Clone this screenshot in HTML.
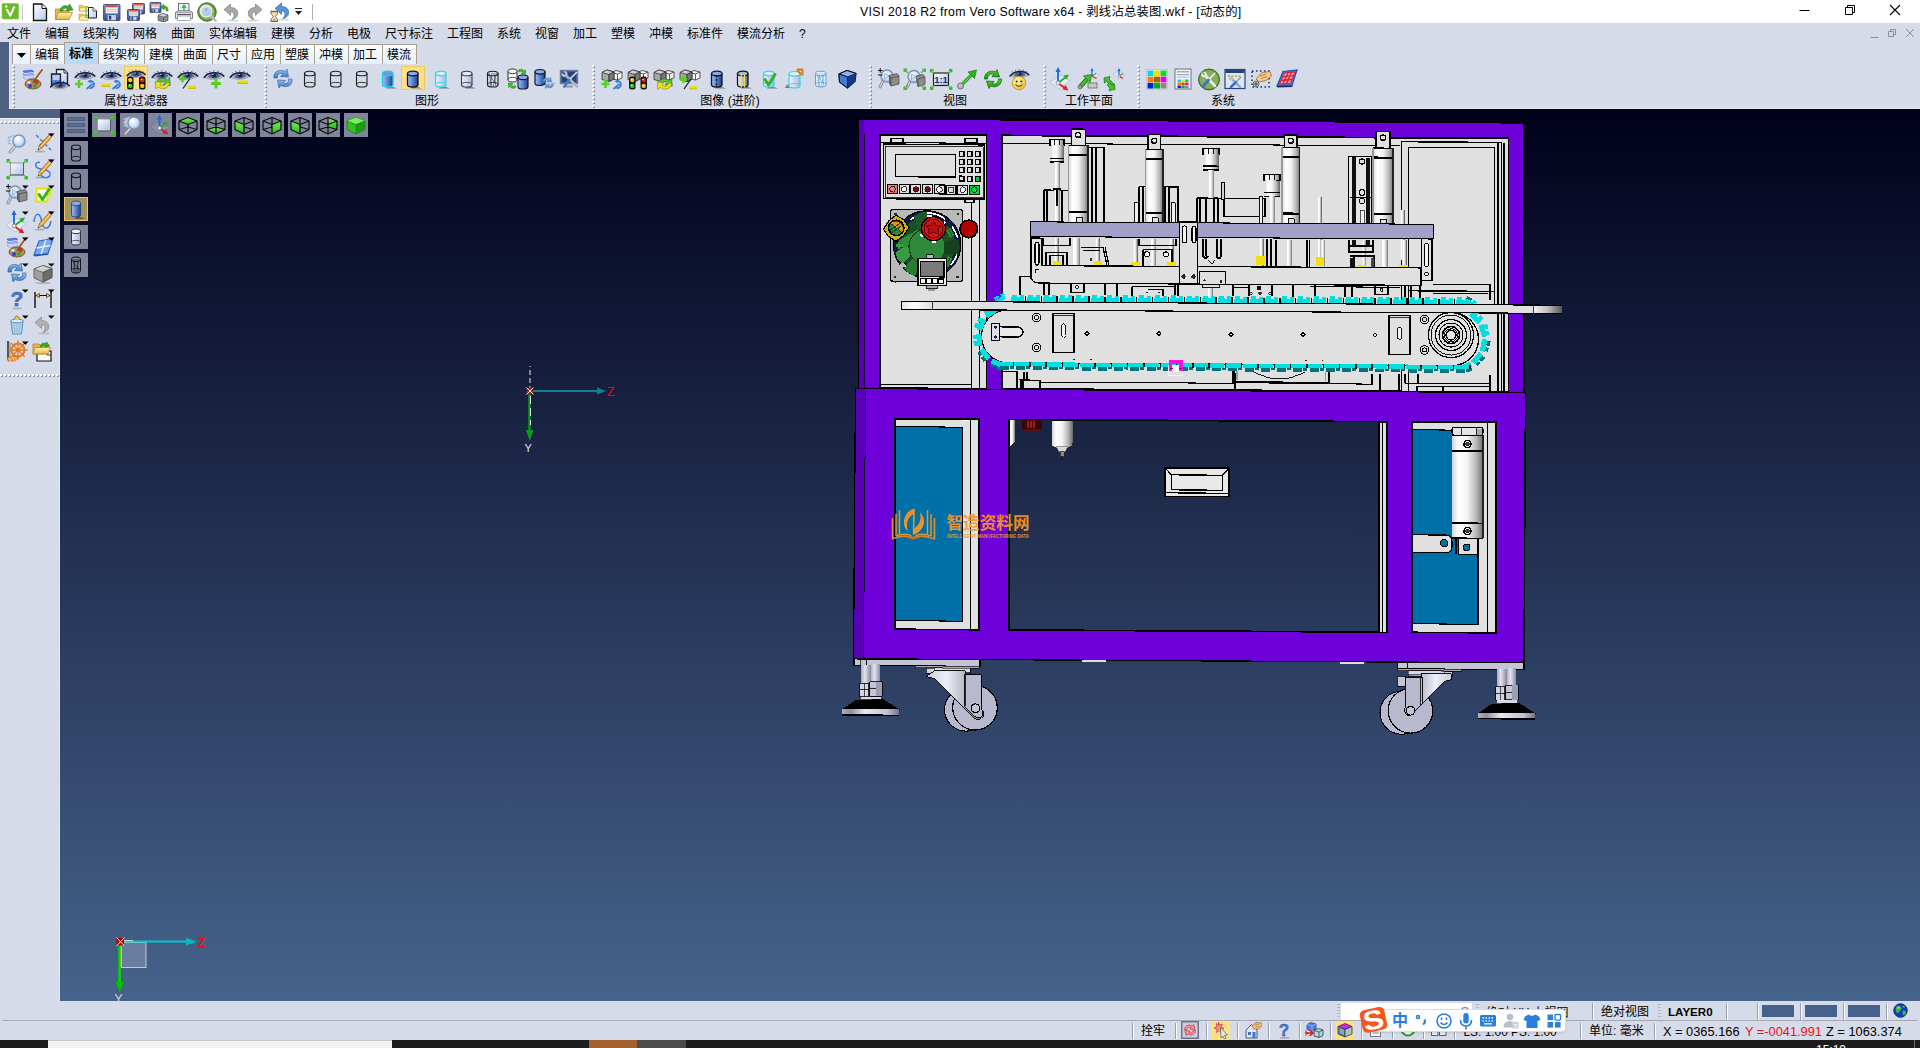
<!DOCTYPE html>
<html lang="zh-CN">
<head>
<meta charset="utf-8">
<title>VISI 2018 R2 from Vero Software x64 - 剥线沾总装图.wkf - [动态的]</title>
<style>
html,body{margin:0;padding:0;}
body{width:1920px;height:1048px;overflow:hidden;position:relative;background:#d6dbe9;
 font-family:"Liberation Sans","Noto Sans CJK SC",sans-serif;font-size:12px;color:#000;}
.abs{position:absolute;}
#titlebar{position:absolute;left:0;top:0;width:1920px;height:23px;background:#fff;}
#title{position:absolute;left:860px;top:4px;width:384px;height:17px;line-height:17px;font-size:12.300px;white-space:nowrap;color:#000;letter-spacing:0.270px;}
#menubar{position:absolute;left:0;top:23px;width:1920px;height:20px;background:#d6dbe9;}
#menubar span{position:absolute;top:2px;height:20px;line-height:19px;font-size:12px;white-space:nowrap;}
#lstrip{position:absolute;left:0;top:42px;width:9px;height:75px;background:#4d6082;}
#lstrip2{position:absolute;left:0;top:109px;width:60px;height:9px;background:#4d6082;}
#ribbon{position:absolute;left:9px;top:42px;width:1911px;height:67px;background:#d6dbe9;box-shadow:inset 1px -1px 0 #e8ecf5;}
#lpanel{position:absolute;left:0;top:118px;width:60px;height:883px;background:#d6dbe9;box-shadow:inset -1px 1px 0 #e8ecf5;}
.tab{position:absolute;top:44px;height:20px;line-height:20px;font-size:12px;text-align:center;text-indent:-1px;
 background:linear-gradient(#fafcff,#e6f0fd);border:1px solid #a8a08c;border-bottom:none;box-sizing:border-box;white-space:nowrap;}
.tab.on{top:42px;height:22px;line-height:23px;background:#bcd9f8;border-color:#a8a08c;font-weight:bold;}
.grp{position:absolute;top:94px;height:14px;line-height:14px;font-size:12px;text-align:center;white-space:nowrap;}
.grip{position:absolute;width:3px;background:repeating-linear-gradient(#fff 0,#fff 2px,rgba(0,0,0,0) 2px,rgba(0,0,0,0) 4px);box-shadow:1px 1px 0 rgba(120,130,150,.5);}
.gripv{position:absolute;top:65px;height:42px;width:2px;background:repeating-linear-gradient(#9aa3b8 0,#9aa3b8 1px,#fff 1px,#fff 2px,rgba(0,0,0,0) 2px,rgba(0,0,0,0) 4px);}
.griph{position:absolute;left:2px;width:56px;height:2px;background:repeating-linear-gradient(90deg,#fff 0,#fff 2px,#9aa3b8 2px,#9aa3b8 3px,rgba(0,0,0,0) 3px,rgba(0,0,0,0) 4px);}
.tbi{position:absolute;top:66px;width:24px;height:24px;}
.tbi.on{background:#ffe08a;box-shadow:inset 0 0 0 1px #f0c858;}
.tbi svg{position:absolute;left:0;top:1px;}
#viewport{position:absolute;left:60px;top:109px;width:1860px;height:892px;overflow:hidden;
 background:linear-gradient(180deg,#01011b 0%,#46638b 100%);}
.vb{position:absolute;width:24px;height:24px;background:#80859b;}
.vb.on{background:#a3955f;box-shadow:inset 0 0 0 1px #ecc765;}
#status1{position:absolute;left:0;top:1001px;width:1920px;height:20px;background:#d6dbe9;}
#status2{position:absolute;left:0;top:1021px;width:1920px;height:19px;background:#d6dbe9;}
#stline{position:absolute;left:2px;top:1020px;width:1916px;height:1px;background:#a6a9b2;}
#taskbar{position:absolute;left:0;top:1040px;width:1920px;height:8px;background:#1d1d1d;overflow:hidden;}
.st{position:absolute;white-space:nowrap;font-size:12px;line-height:16px;}
.sep{position:absolute;width:1px;background:#9aa0ae;box-shadow:1px 0 0 #fff;}
</style>
</head>
<body>

<svg width="0" height="0" style="position:absolute"><defs>
<linearGradient id="gBlueCyl" x1="0" x2="1" y1="0" y2="0"><stop offset="0" stop-color="#9cc0f0"/><stop offset=".35" stop-color="#6c98e0"/><stop offset="1" stop-color="#243c88"/></linearGradient>
<linearGradient id="gPaleCyl" x1="0" x2="1" y1="0" y2="0"><stop offset="0" stop-color="#eef2fb"/><stop offset=".5" stop-color="#cdd8ee"/><stop offset="1" stop-color="#a9b8d8"/></linearGradient>
<linearGradient id="gGreyCyl" x1="0" x2="1" y1="0" y2="0"><stop offset="0" stop-color="#e8ecf4"/><stop offset=".5" stop-color="#b8c4dc"/><stop offset="1" stop-color="#56648c"/></linearGradient>
<linearGradient id="gDoc" x1="0" x2="1" y1="0" y2="1"><stop offset="0" stop-color="#ffffff"/><stop offset="1" stop-color="#b4c8f0"/></linearGradient>
<linearGradient id="gBlueArrow" x1="0" x2="0" y1="0" y2="1"><stop offset="0" stop-color="#9cc4f0"/><stop offset="1" stop-color="#3a74c0"/></linearGradient>
<linearGradient id="gGreen" x1="0" x2="0" y1="0" y2="1"><stop offset="0" stop-color="#58d838"/><stop offset="1" stop-color="#1c8c14"/></linearGradient>
<radialGradient id="gLens" cx=".4" cy=".35" r=".7"><stop offset="0" stop-color="#ffffff"/><stop offset=".6" stop-color="#cfe0f4"/><stop offset="1" stop-color="#8fb0d8"/></radialGradient>
<radialGradient id="gSmile" cx=".4" cy=".35" r=".7"><stop offset="0" stop-color="#fff8b0"/><stop offset="1" stop-color="#f0b820"/></radialGradient>
<linearGradient id="gCubeTop" x1="0" x2="1" y1="0" y2="1"><stop offset="0" stop-color="#f0f0f0"/><stop offset="1" stop-color="#b0b0b0"/></linearGradient>
<linearGradient id="gFolder" x1="0" x2="0" y1="0" y2="1"><stop offset="0" stop-color="#fff0a8"/><stop offset="1" stop-color="#e8b848"/></linearGradient>
<linearGradient id="gFloppy" x1="0" x2="0" y1="0" y2="1"><stop offset="0" stop-color="#7890c8"/><stop offset="1" stop-color="#3c5090"/></linearGradient>
<linearGradient id="gBox" x1="0" x2="1" y1="0" y2="1"><stop offset="0" stop-color="#ffffff"/><stop offset="1" stop-color="#a8c0e8"/></linearGradient>
<linearGradient id="gGrCube" x1="0" x2="0" y1="0" y2="1"><stop offset="0" stop-color="#7cf060"/><stop offset="1" stop-color="#28b818"/></linearGradient>
<pattern id="pGrip" width="4" height="4" patternUnits="userSpaceOnUse"><rect x="1" y="1" width="2" height="2" fill="#8e97ae"/><rect x="0" y="0" width="2" height="2" fill="#ffffff"/></pattern>
</defs></svg>
<div id="titlebar">
<svg class="abs" style="left:1px;top:2px" width="20" height="20" viewBox="0 0 20 20"><rect x="1" y="1.500" width="16.500" height="15.500" rx="1" fill="#6cb82c"/><rect x="1" y="1.500" width="16.500" height="15.500" rx="1" fill="none" stroke="#8cd048" stroke-width=".8"/><path d="M4.500 7L8.500 14.500H10L14.500 4.500H12L9.300 11.500L6.800 7z" fill="#fff"/><circle cx="5.300" cy="4.500" r="1.200" fill="#fff"/></svg>
<svg class="abs" style="left:30px;top:2px" width="20" height="20" viewBox="0 0 20 20"><path d="M3.500 2H12L16.500 6.500V18.500H3.500z" fill="url(#gDoc)" stroke="#111" stroke-width="1.300"/><path d="M12 2V6.500H16.500" fill="#fff" stroke="#111" stroke-width="1"/></svg>
<svg class="abs" style="left:54px;top:2px" width="20" height="20" viewBox="0 0 20 20"><path d="M1.500 7H7L8.500 8.500H15V17.500H1.500z" fill="#e8b848" stroke="#b08020" stroke-width=".7"/><path d="M1.500 17.500L4.500 10.500H18.500L15 17.500z" fill="url(#gFolder)" stroke="#b08020" stroke-width=".7"/><path d="M6 9C6.500 4.500 11 2.500 14.500 4.500L15.500 2L19 8L12.500 8.500L13.500 6.500C11 5.500 8.500 6.500 8.500 9z" fill="#38b028" stroke="#187810" stroke-width=".7"/></svg>
<svg class="abs" style="left:78px;top:2px" width="20" height="20" viewBox="0 0 20 20"><path d="M1 3.500H5L6 4.500H10V9H1z" fill="#f0cc60" stroke="#c09830" stroke-width=".6"/><path d="M1 9L2.500 5.500H11L10 9z" fill="#fff0a8" stroke="#c09830" stroke-width=".5"/><path d="M1 12H5L6 13H10V18H1z" fill="#f0cc60" stroke="#c09830" stroke-width=".6"/><path d="M1 18L2.500 14H11L10 18z" fill="#fff0a8" stroke="#c09830" stroke-width=".5"/><path d="M8 5V15.500H13" fill="none" stroke="#58c848" stroke-width="1.200"/><path d="M10.500 5.500H15L18.500 9V16H10.500z" fill="url(#gDoc)" stroke="#222" stroke-width="1"/><path d="M15 5.500V9H18.500" fill="#fff" stroke="#222" stroke-width=".7"/></svg>
<svg class="abs" style="left:102px;top:2px" width="20" height="20" viewBox="0 0 20 20"><rect x="1.5" y="2.5" width="16.5" height="16" rx=".8" fill="url(#gFloppy)" stroke="#2c3c70" stroke-width=".8"/><rect x="3.81" y="3.1" width="11.879999999999999" height="8.32" fill="#f4f4f4"/><rect x="3.81" y="3.1" width="11.879999999999999" height="2.08" fill="#e84030"/><path d="M4.800000000000001 7.3h9.9M4.800000000000001 9.219999999999999h9.9" stroke="#a8a8a8" stroke-width=".6"/><rect x="5.625" y="13.06" width="8.25" height="5.12" fill="#c8d0e0"/><rect x="6.945" y="13.7" width="2.31" height="3.84" fill="#2c3c70"/></svg>
<svg class="abs" style="left:126px;top:2px" width="20" height="20" viewBox="0 0 20 20"><rect x="6.5" y="1.5" width="12" height="10.5" rx=".8" fill="url(#gFloppy)" stroke="#2c3c70" stroke-width=".8"/><rect x="8.18" y="2.1" width="8.64" height="5.46" fill="#f4f4f4"/><rect x="8.18" y="2.1" width="8.64" height="1.365" fill="#e84030"/><path d="M8.9 4.65h7.199999999999999M8.9 5.91h7.199999999999999" stroke="#a8a8a8" stroke-width=".6"/><rect x="9.5" y="8.43" width="6.0" height="3.36" fill="#c8d0e0"/><rect x="10.46" y="8.85" width="1.6800000000000002" height="2.52" fill="#2c3c70"/><rect x="1.5" y="7.5" width="12" height="11" rx=".8" fill="url(#gFloppy)" stroke="#2c3c70" stroke-width=".8"/><rect x="3.18" y="8.1" width="8.64" height="5.720000000000001" fill="#f4f4f4"/><rect x="3.18" y="8.1" width="8.64" height="1.4300000000000002" fill="#e84030"/><path d="M3.9000000000000004 10.8h7.199999999999999M3.9000000000000004 12.120000000000001h7.199999999999999" stroke="#a8a8a8" stroke-width=".6"/><rect x="4.5" y="14.760000000000002" width="6.0" height="3.52" fill="#c8d0e0"/><rect x="5.46" y="15.2" width="1.6800000000000002" height="2.6399999999999997" fill="#2c3c70"/></svg>
<svg class="abs" style="left:149px;top:2px" width="20" height="20" viewBox="0 0 20 20"><rect x="1" y="0.5" width="11" height="10" rx=".8" fill="url(#gFloppy)" stroke="#2c3c70" stroke-width=".8"/><rect x="2.54" y="1.1" width="7.92" height="5.2" fill="#f4f4f4"/><rect x="2.54" y="1.1" width="7.92" height="1.3" fill="#e84030"/><path d="M3.2 3.5h6.6M3.2 4.7h6.6" stroke="#a8a8a8" stroke-width=".6"/><rect x="3.75" y="7.1000000000000005" width="5.5" height="3.2" fill="#c8d0e0"/><rect x="4.630000000000001" y="7.5" width="1.54" height="2.4" fill="#2c3c70"/><path d="M9 13.500L13.500 11.500L19 13V18.500L14.500 20L9 18.500z" fill="#8c8c8c" stroke="#444" stroke-width=".6"/><path d="M9 13.500L14.500 15L19 13L13.500 11.500z" fill="#d8d8d8" stroke="#444" stroke-width=".5"/><path d="M14.500 15V20" stroke="#444" stroke-width=".5"/><path d="M19 9C19.500 5.500 17 3.500 14.500 4L14.800 2L11.500 5.500L15.500 7.800L15.200 5.800C16.500 5.800 17.500 7 17.200 9z" fill="#38b028" stroke="#187810" stroke-width=".5"/></svg>
<svg class="abs" style="left:174px;top:2px" width="20" height="20" viewBox="0 0 20 20"><rect x="4.500" y="1.500" width="10.500" height="9" fill="#e8f0fc" stroke="#506890" stroke-width=".9"/><path d="M9.800 8.500V5.500H7.800L10 2.500L12.200 5.500H10.200V8.500z" fill="#30c030" stroke="#18a018" stroke-width=".5"/><path d="M1.500 10.500H18.500V16.500H1.500z" fill="#e0e0e4" stroke="#707078" stroke-width=".9"/><path d="M1.500 10.500L4 8.500H16L18.500 10.500" fill="#c8c8d0" stroke="#707078" stroke-width=".7"/><rect x="3.500" y="14" width="13" height="4.500" fill="#fcfcfc" stroke="#8c8c94" stroke-width=".7"/><path d="M3 12.500h14" stroke="#58585c" stroke-width="1"/></svg>
<svg class="abs" style="left:197px;top:2px" width="20" height="20" viewBox="0 0 20 20"><circle cx="10" cy="10" r="9.300" fill="#5c9438" stroke="#386420" stroke-width=".8"/><circle cx="10" cy="10" r="7.500" fill="#88b860"/><path d="M13.500 13.500L19 19" stroke="#c8ccd4" stroke-width="2.600" stroke-linecap="round"/><path d="M13.500 13.500L19 19" stroke="#888c98" stroke-width=".7"/><circle cx="9" cy="9" r="5.800" fill="url(#gLens)" stroke="#e8ecf4" stroke-width="1.300"/><circle cx="9" cy="9" r="4" fill="#a8c4e4" opacity=".7"/><path d="M9 6v3.500" stroke="#6888b0" stroke-width=".9"/></svg>
<svg class="abs" style="left:222px;top:2px" width="20" height="20" viewBox="0 0 20 20"><g transform=""><path d="M2 7.500L8.500 2V5.500C14 5.500 16.500 9 15.500 13C14.800 15.500 12.500 17 10 17.500C12 15.500 12.500 13 11.500 11.500C10.800 10.300 9.800 10 8.500 10V13.500z" fill="#a8a8a8" stroke="#808080" stroke-width=".7"/><ellipse cx="11" cy="18.500" rx="6" ry="1" fill="#888" opacity=".35"/></g></svg>
<svg class="abs" style="left:244px;top:2px" width="20" height="20" viewBox="0 0 20 20"><g transform="translate(20 0) scale(-1 1)"><path d="M2 7.500L8.500 2V5.500C14 5.500 16.500 9 15.500 13C14.800 15.500 12.500 17 10 17.500C12 15.500 12.500 13 11.500 11.500C10.800 10.300 9.800 10 8.500 10V13.500z" fill="#a8a8a8" stroke="#808080" stroke-width=".7"/><ellipse cx="11" cy="18.500" rx="6" ry="1" fill="#888" opacity=".35"/></g></svg>
<svg class="abs" style="left:269px;top:2px" width="20" height="20" viewBox="0 0 20 20"><g transform="translate(4 -1)"><g transform=""><path d="M2 7.500L8.500 2V5.500C14 5.500 16.500 9 15.500 13C14.800 15.500 12.500 17 10 17.500C12 15.500 12.500 13 11.500 11.500C10.800 10.300 9.800 10 8.500 10V13.500z" fill="#5c90d8" stroke="#3868b0" stroke-width=".7"/><ellipse cx="11" cy="18.500" rx="6" ry="1" fill="#888" opacity=".35"/></g></g><path d="M2 9.500H8.500V11C8.500 12.500 6.500 13.500 6.500 14.500C6.500 15.500 8.500 16.500 8.500 18V19.500H2V18C2 16.500 4 15.500 4 14.500C4 13.500 2 12.500 2 11z" fill="#f0e4c0" stroke="#6c4c20" stroke-width=".8"/><path d="M1.500 9.500H9M1.500 19.500H9" stroke="#8c6428" stroke-width="1.400"/><path d="M3.500 18.500L5.250 16.500L7 18.500z" fill="#c09040"/></svg>
<svg class="abs" style="left:293px;top:8px" width="12" height="8" viewBox="0 0 12 8"><rect x="2" y="0" width="7" height="1" fill="#222"/><path d="M2 3h7l-3.5 4z" fill="#222"/></svg>
<div class="abs" style="left:22px;top:4px;width:1px;height:16px;background:#c8c8c8"></div>
<div class="abs" style="left:312px;top:4px;width:1px;height:16px;background:#b0b0b0"></div>
<div id="title">VISI 2018 R2 from Vero Software x64 - 剥线沾总装图.wkf - [动态的]</div>
<svg class="abs" style="left:1790px;top:0" width="130" height="23" viewBox="0 0 130 23">
<path d="M9.5 10.5h10" stroke="#000" stroke-width="1" fill="none"/>
<path d="M55.5 7.500h7v7h-7z M57.5 7.500v-2h7v7h-2" stroke="#000" stroke-width="1" fill="none"/>
<path d="M100 5l10 10M110 5l-10 10" stroke="#000" stroke-width="1.1" fill="none"/>
</svg>
</div>
<div id="menubar">
<span style="left:7px;width:24px">文件</span>
<span style="left:45px;width:24px">编辑</span>
<span style="left:83px;width:36px">线架构</span>
<span style="left:133px;width:24px">网格</span>
<span style="left:171px;width:24px">曲面</span>
<span style="left:209px;width:48px">实体编辑</span>
<span style="left:271px;width:24px">建模</span>
<span style="left:309px;width:24px">分析</span>
<span style="left:347px;width:24px">电极</span>
<span style="left:385px;width:48px">尺寸标注</span>
<span style="left:447px;width:36px">工程图</span>
<span style="left:497px;width:24px">系统</span>
<span style="left:535px;width:24px">视窗</span>
<span style="left:573px;width:24px">加工</span>
<span style="left:611px;width:24px">塑模</span>
<span style="left:649px;width:24px">冲模</span>
<span style="left:687px;width:36px">标准件</span>
<span style="left:737px;width:48px">模流分析</span>
<span style="left:799px;width:6px">?</span>
<svg class="abs" style="left:1865px;top:3px" width="55" height="14" viewBox="0 0 55 14">
<path d="M5.5 11.500h8" stroke="#8a8f9c" stroke-width="1" fill="none"/>
<path d="M23.500 5.500h5v5h-5z M25.500 5.500v-2h5v5h-2" stroke="#8a8f9c" stroke-width="1" fill="none"/>
<path d="M41 3l8 8M49 3l-8 8" stroke="#8a8f9c" stroke-width="1" fill="none"/>
</svg>
</div>
<div id="ribbon"></div><div id="lstrip"></div><div id="lstrip2"></div><div id="lpanel"></div>
<div class="tab" style="left:12px;width:19px"><svg width="9" height="5" viewBox="0 0 9 5" style="vertical-align:1px"><path d="M0 0h9l-4.500 5z" fill="#000"/></svg></div>
<div class="tab" style="left:30px;width:35px">编辑</div>
<div class="tab on" style="left:64px;width:35px">标准</div>
<div class="tab" style="left:98px;width:47px">线架构</div>
<div class="tab" style="left:144px;width:35px">建模</div>
<div class="tab" style="left:178px;width:35px">曲面</div>
<div class="tab" style="left:212px;width:35px">尺寸</div>
<div class="tab" style="left:246px;width:35px">应用</div>
<div class="tab" style="left:280px;width:35px">塑膜</div>
<div class="tab" style="left:314px;width:35px">冲模</div>
<div class="tab" style="left:348px;width:35px">加工</div>
<div class="tab" style="left:382px;width:35px">模流</div>
<svg class="abs" style="left:12px;top:65px" width="4" height="43" viewBox="0 0 4 43"><rect width="4" height="43" fill="url(#pGrip)"/></svg>
<svg class="abs" style="left:264px;top:65px" width="4" height="43" viewBox="0 0 4 43"><rect width="4" height="43" fill="url(#pGrip)"/></svg>
<svg class="abs" style="left:592px;top:65px" width="4" height="43" viewBox="0 0 4 43"><rect width="4" height="43" fill="url(#pGrip)"/></svg>
<svg class="abs" style="left:869px;top:65px" width="4" height="43" viewBox="0 0 4 43"><rect width="4" height="43" fill="url(#pGrip)"/></svg>
<svg class="abs" style="left:1043px;top:65px" width="4" height="43" viewBox="0 0 4 43"><rect width="4" height="43" fill="url(#pGrip)"/></svg>
<svg class="abs" style="left:1137px;top:65px" width="4" height="43" viewBox="0 0 4 43"><rect width="4" height="43" fill="url(#pGrip)"/></svg>
<div class="tbi" style="left:21px"><svg width="24" height="24" viewBox="0 0 24 24"><path d="M2 4L11 3L13 5L4 6.500z" fill="#5878f0" stroke="#2848c0" stroke-width=".5"/><path d="M2 7L11 6L13 8L4 9.500z" fill="#8ca4f4" stroke="#4060c8" stroke-width=".5"/><path d="M2 10L11 9L13 11L4 12.500z" fill="#d0d8f4" stroke="#7088c8" stroke-width=".5"/><path d="M3 6.600L12 5.600M3 9.600L12 8.600" stroke="#f8f8ff" stroke-width=".8"/><ellipse cx="12" cy="17" rx="8" ry="5" fill="#b88858" stroke="#6c4420" stroke-width=".8"/><ellipse cx="8" cy="15.500" rx="1.700" ry="1.300" fill="#f0e8d8"/><circle cx="15.500" cy="15" r="1.900" fill="#e02020"/><circle cx="14" cy="18.800" r="1.900" fill="#20b020"/><circle cx="9" cy="19" r="1.900" fill="#2040e0"/><path d="M21 3L13.500 13" stroke="#a05818" stroke-width="1.800" stroke-linecap="round"/><path d="M14.500 11.500L11.500 15.500L13 16z" fill="#444"/></svg></div>
<div class="tbi" style="left:47px"><svg width="24" height="24" viewBox="0 0 24 24"><path d="M9.500 2.500H17L20.500 6V17H9.500z" fill="url(#gDoc)" stroke="#20242c" stroke-width="1.300"/><path d="M17 2.500V6H20.500" fill="#d8e4f8" stroke="#20242c" stroke-width=".9"/><path d="M4.500 7H13.500V19H4.500z" fill="#5c84d8" stroke="#20242c" stroke-width="1.300"/><path d="M5.500 8H12.500V13H5.500z" fill="#b8ccf0"/><g transform="translate(2.7 12.8) scale(0.874 0.7789999999999999)"><path d="M1.500 9C5 3.500 17 2.500 22 7.500C18 11.500 7 12.500 1.500 9z" fill="#c4bcd4"/><path d="M5 8.500C7 3.500 17 3 19 7.500C16 11 8 11.500 5 8.500z" fill="#52709c"/><circle cx="12" cy="6.800" r="3.600" fill="#3c5888"/><circle cx="12" cy="6.800" r="1.900" fill="#101c38"/><circle cx="10.600" cy="5.500" r=".9" fill="#c8d8f0"/><path d="M1.200 9.200C5 2.800 17 1.300 22.300 7.600" fill="none" stroke="#182644" stroke-width="2" stroke-linecap="round"/><path d="M2 9.500C7 12.800 17 12 21.500 8.200" fill="none" stroke="#9c7c94" stroke-width=".8"/><path d="M4.500 4.800l-1.300-1.600M7.500 3.200l-.7-1.800M11.500 2.400l0-1.800M15.500 2.800l.8-1.600M19 4.500l1.400-1.300" stroke="#182644" stroke-width=".8" fill="none"/></g></svg></div>
<div class="tbi" style="left:73px"><svg width="24" height="24" viewBox="0 0 24 24"><g transform="translate(1.2 2.8) scale(0.92 0.82)"><path d="M1.500 9C5 3.500 17 2.500 22 7.500C18 11.500 7 12.500 1.500 9z" fill="#c4bcd4"/><path d="M5 8.500C7 3.500 17 3 19 7.500C16 11 8 11.500 5 8.500z" fill="#52709c"/><circle cx="12" cy="6.800" r="3.600" fill="#3c5888"/><circle cx="12" cy="6.800" r="1.900" fill="#101c38"/><circle cx="10.600" cy="5.500" r=".9" fill="#c8d8f0"/><path d="M1.200 9.200C5 2.800 17 1.300 22.300 7.600" fill="none" stroke="#182644" stroke-width="2" stroke-linecap="round"/><path d="M2 9.500C7 12.800 17 12 21.500 8.200" fill="none" stroke="#9c7c94" stroke-width=".8"/><path d="M4.500 4.800l-1.300-1.600M7.500 3.200l-.7-1.800M11.500 2.400l0-1.800M15.500 2.800l.8-1.600M19 4.500l1.400-1.300" stroke="#182644" stroke-width=".8" fill="none"/></g><path d="M2 17.0h8M6.0 13v8" stroke="#58d020" stroke-width="2.6" fill="none"/><g transform="translate(12.5 12.5)"><path d="M1 9.500L7 4.500" stroke="#3c7cd8" stroke-width="1.800" fill="none"/><path d="M4 1.500a3.600 3.600 0 1 1 0 7" stroke="#3c7cd8" stroke-width="1.800" fill="none"/><path d="M5.500 0L2 1.800L5.200 4z" fill="#3c7cd8"/></g></svg></div>
<div class="tbi" style="left:99px"><svg width="24" height="24" viewBox="0 0 24 24"><g transform="translate(1.2 2.8) scale(0.92 0.82)"><path d="M1.500 9C5 3.500 17 2.500 22 7.500C18 11.500 7 12.500 1.500 9z" fill="#c4bcd4"/><path d="M5 8.500C7 3.500 17 3 19 7.500C16 11 8 11.500 5 8.500z" fill="#52709c"/><circle cx="12" cy="6.800" r="3.600" fill="#3c5888"/><circle cx="12" cy="6.800" r="1.900" fill="#101c38"/><circle cx="10.600" cy="5.500" r=".9" fill="#c8d8f0"/><path d="M1.200 9.200C5 2.800 17 1.300 22.300 7.600" fill="none" stroke="#182644" stroke-width="2" stroke-linecap="round"/><path d="M2 9.500C7 12.800 17 12 21.500 8.200" fill="none" stroke="#9c7c94" stroke-width=".8"/><path d="M4.500 4.800l-1.300-1.600M7.500 3.200l-.7-1.800M11.500 2.400l0-1.800M15.500 2.800l.8-1.600M19 4.500l1.400-1.300" stroke="#182644" stroke-width=".8" fill="none"/></g><path d="M2.5 18h9" stroke="#e8e000" stroke-width="2.6" fill="none"/><path d="M2.5 19.4h9" stroke="#a8a000" stroke-width=".6" fill="none"/><g transform="translate(12.5 12.5)"><path d="M1 9.500L7 4.500" stroke="#3c7cd8" stroke-width="1.800" fill="none"/><path d="M4 1.500a3.600 3.600 0 1 1 0 7" stroke="#3c7cd8" stroke-width="1.800" fill="none"/><path d="M5.500 0L2 1.800L5.200 4z" fill="#3c7cd8"/></g></svg></div>
<div class="tbi on" style="left:124px"><svg width="24" height="24" viewBox="0 0 24 24"><g transform="translate(2.2 1.8) scale(0.8464 0.7544)"><path d="M1.500 9C5 3.500 17 2.500 22 7.500C18 11.500 7 12.500 1.500 9z" fill="#c4bcd4"/><path d="M5 8.500C7 3.500 17 3 19 7.500C16 11 8 11.500 5 8.500z" fill="#52709c"/><circle cx="12" cy="6.800" r="3.600" fill="#3c5888"/><circle cx="12" cy="6.800" r="1.900" fill="#101c38"/><circle cx="10.600" cy="5.500" r=".9" fill="#c8d8f0"/><path d="M1.200 9.200C5 2.800 17 1.300 22.300 7.600" fill="none" stroke="#182644" stroke-width="2" stroke-linecap="round"/><path d="M2 9.500C7 12.800 17 12 21.500 8.200" fill="none" stroke="#9c7c94" stroke-width=".8"/><path d="M4.500 4.800l-1.300-1.600M7.500 3.200l-.7-1.800M11.500 2.400l0-1.800M15.500 2.800l.8-1.600M19 4.500l1.400-1.300" stroke="#182644" stroke-width=".8" fill="none"/></g><rect x="3" y="9.5" width="6.500" height="13" rx="2.500" fill="#141414"/><circle cx="6.25" cy="13.1" r="2.200" fill="#f0c020"/><circle cx="6.25" cy="18.9" r="2.200" fill="#20d020"/><circle cx="5.6" cy="12.5" r=".8" fill="#fff" opacity=".7"/><circle cx="5.6" cy="18.3" r=".8" fill="#fff" opacity=".7"/><rect x="15" y="9.5" width="6.500" height="13" rx="2.500" fill="#141414"/><circle cx="18.25" cy="13.1" r="2.200" fill="#e82020"/><circle cx="18.25" cy="18.9" r="2.200" fill="#f0c020"/><circle cx="17.6" cy="12.5" r=".8" fill="#fff" opacity=".7"/><circle cx="17.6" cy="18.3" r=".8" fill="#fff" opacity=".7"/></svg></div>
<div class="tbi" style="left:150px"><svg width="24" height="24" viewBox="0 0 24 24"><g transform="translate(1.2 2.8) scale(0.92 0.82)"><path d="M1.500 9C5 3.500 17 2.500 22 7.500C18 11.500 7 12.500 1.500 9z" fill="#c4bcd4"/><path d="M5 8.500C7 3.500 17 3 19 7.500C16 11 8 11.500 5 8.500z" fill="#52709c"/><circle cx="12" cy="6.800" r="3.600" fill="#3c5888"/><circle cx="12" cy="6.800" r="1.900" fill="#101c38"/><circle cx="10.600" cy="5.500" r=".9" fill="#c8d8f0"/><path d="M1.200 9.200C5 2.800 17 1.300 22.300 7.600" fill="none" stroke="#182644" stroke-width="2" stroke-linecap="round"/><path d="M2 9.500C7 12.800 17 12 21.500 8.200" fill="none" stroke="#9c7c94" stroke-width=".8"/><path d="M4.500 4.800l-1.300-1.600M7.500 3.200l-.7-1.800M11.500 2.400l0-1.800M15.500 2.800l.8-1.600M19 4.500l1.400-1.300" stroke="#182644" stroke-width=".8" fill="none"/></g><g transform="translate(4 9) scale(1.2)"><path d="M1.500 6.500C2 2 8 .500 11 3.500L13 1.500L13.500 8L7.500 7L9.500 5.200C7.500 3.500 4.500 4.500 4 7z" fill="#58c838" stroke="#1c7c18" stroke-width=".6"/><path d="M13 6C12.500 10.500 6.500 12 3.500 9L1.500 11L1 4.500L7 5.500L5 7.300C7 9 10 8 10.500 5.500z" fill="#f0e020" stroke="#a09000" stroke-width=".6"/></g></svg></div>
<div class="tbi" style="left:176px"><svg width="24" height="24" viewBox="0 0 24 24"><g transform="translate(1.2 2.8) scale(0.92 0.82)"><path d="M1.500 9C5 3.500 17 2.500 22 7.500C18 11.500 7 12.500 1.500 9z" fill="#c4bcd4"/><path d="M5 8.500C7 3.500 17 3 19 7.500C16 11 8 11.500 5 8.500z" fill="#52709c"/><circle cx="12" cy="6.800" r="3.600" fill="#3c5888"/><circle cx="12" cy="6.800" r="1.900" fill="#101c38"/><circle cx="10.600" cy="5.500" r=".9" fill="#c8d8f0"/><path d="M1.200 9.200C5 2.800 17 1.300 22.300 7.600" fill="none" stroke="#182644" stroke-width="2" stroke-linecap="round"/><path d="M2 9.500C7 12.800 17 12 21.500 8.200" fill="none" stroke="#9c7c94" stroke-width=".8"/><path d="M4.500 4.800l-1.300-1.600M7.500 3.200l-.7-1.800M11.500 2.400l0-1.800M15.500 2.800l.8-1.600M19 4.500l1.400-1.300" stroke="#182644" stroke-width=".8" fill="none"/></g><path d="M3 12.0h7M6.5 8.5v7" stroke="#58d020" stroke-width="2.4" fill="none"/><path d="M7 21.5L14 11.5" stroke="#222" stroke-width="1.300"/><path d="M12 20.0h8" stroke="#e8e000" stroke-width="2.6" fill="none"/><path d="M12 21.4h8" stroke="#a8a000" stroke-width=".6" fill="none"/></svg></div>
<div class="tbi" style="left:202px"><svg width="24" height="24" viewBox="0 0 24 24"><g transform="translate(1.2 2.8) scale(0.92 0.82)"><path d="M1.500 9C5 3.500 17 2.500 22 7.500C18 11.500 7 12.500 1.500 9z" fill="#c4bcd4"/><path d="M5 8.500C7 3.500 17 3 19 7.500C16 11 8 11.500 5 8.500z" fill="#52709c"/><circle cx="12" cy="6.800" r="3.600" fill="#3c5888"/><circle cx="12" cy="6.800" r="1.900" fill="#101c38"/><circle cx="10.600" cy="5.500" r=".9" fill="#c8d8f0"/><path d="M1.200 9.200C5 2.800 17 1.300 22.300 7.600" fill="none" stroke="#182644" stroke-width="2" stroke-linecap="round"/><path d="M2 9.500C7 12.800 17 12 21.500 8.200" fill="none" stroke="#9c7c94" stroke-width=".8"/><path d="M4.500 4.800l-1.300-1.600M7.500 3.200l-.7-1.800M11.500 2.400l0-1.800M15.500 2.800l.8-1.600M19 4.500l1.400-1.300" stroke="#182644" stroke-width=".8" fill="none"/></g><path d="M9 16.5h10M14.0 11.5v10" stroke="#58d020" stroke-width="3" fill="none"/></svg></div>
<div class="tbi" style="left:228px"><svg width="24" height="24" viewBox="0 0 24 24"><g transform="translate(1.2 2.8) scale(0.92 0.82)"><path d="M1.500 9C5 3.500 17 2.500 22 7.500C18 11.500 7 12.500 1.500 9z" fill="#c4bcd4"/><path d="M5 8.500C7 3.500 17 3 19 7.500C16 11 8 11.500 5 8.500z" fill="#52709c"/><circle cx="12" cy="6.800" r="3.600" fill="#3c5888"/><circle cx="12" cy="6.800" r="1.900" fill="#101c38"/><circle cx="10.600" cy="5.500" r=".9" fill="#c8d8f0"/><path d="M1.200 9.200C5 2.800 17 1.300 22.300 7.600" fill="none" stroke="#182644" stroke-width="2" stroke-linecap="round"/><path d="M2 9.500C7 12.800 17 12 21.500 8.200" fill="none" stroke="#9c7c94" stroke-width=".8"/><path d="M4.500 4.800l-1.300-1.600M7.500 3.200l-.7-1.800M11.500 2.400l0-1.800M15.500 2.800l.8-1.600M19 4.500l1.400-1.300" stroke="#182644" stroke-width=".8" fill="none"/></g><path d="M9 15h11" stroke="#e8e000" stroke-width="3" fill="none"/><path d="M9 16.4h11" stroke="#a8a000" stroke-width=".6" fill="none"/></svg></div>
<div class="tbi" style="left:271px"><svg width="24" height="24" viewBox="0 0 24 24"><g transform="translate(0 0) scale(1)"><path d="M3 11C2 5 8 1.500 14 4.500L16 2L17.500 10L9.500 9.500L12 7C9 5.500 6 7 6.500 11z" fill="url(#gBlueArrow)" stroke="#3868b0" stroke-width=".7"/><path d="M21 12C22 18 16 21.500 10 18.500L8 21L6.500 13L14.500 13.500L12 16C15 17.500 18 16 17.500 12z" fill="url(#gBlueArrow)" stroke="#3868b0" stroke-width=".7"/></g></svg></div>
<div class="tbi" style="left:298px"><svg width="24" height="24" viewBox="0 0 24 24"><path d="M6.5 6.5V17.7A5.25 2.3 0 0 0 17.0 17.7V6.5" fill="none" stroke="#222" stroke-width="1.1"/><ellipse cx="11.75" cy="6.5" rx="5.25" ry="2.3" fill="none" stroke="#222" stroke-width="1.1"/><path d="M6.5 17.7A5.25 2.3 0 0 1 17.0 17.7" fill="none" stroke="#222" stroke-width="0.8800000000000001"/></svg></div>
<div class="tbi" style="left:324px"><svg width="24" height="24" viewBox="0 0 24 24"><path d="M6.5 6.5V17.7A5.25 2.3 0 0 0 17.0 17.7V6.5" fill="none" stroke="#222" stroke-width="1.1"/><ellipse cx="11.75" cy="6.5" rx="5.25" ry="2.3" fill="none" stroke="#222" stroke-width="1.1"/><path d="M6.5 17.7A5.25 2.3 0 0 1 17.0 17.7" fill="none" stroke="#222" stroke-width="0.8800000000000001"/></svg></div>
<div class="tbi" style="left:350px"><svg width="24" height="24" viewBox="0 0 24 24"><path d="M6.5 6.5V17.7A5.25 2.3 0 0 0 17.0 17.7V6.5" fill="none" stroke="#222" stroke-width="1.1"/><ellipse cx="11.75" cy="6.5" rx="5.25" ry="2.3" fill="none" stroke="#222" stroke-width="1.1"/><path d="M6.5 17.7A5.25 2.3 0 0 1 17.0 17.7" fill="none" stroke="#222" stroke-width="0.8800000000000001"/></svg></div>
<div class="tbi" style="left:376px"><svg width="24" height="24" viewBox="0 0 24 24"><path d="M10 21.5l11 0l-9 -3.500z" fill="#30303c" opacity=".55"/><path d="M6.5 6.5V17.7A5.25 2.3 0 0 0 17.0 17.7V6.5" fill="url(#gBlueCyl)" stroke="#18d0e8" stroke-width="1.3"/><ellipse cx="11.75" cy="6.5" rx="5.25" ry="2.3" fill="#6c98e0" stroke="#18d0e8" stroke-width="1.3"/></svg></div>
<div class="tbi on" style="left:401px"><svg width="24" height="24" viewBox="0 0 24 24"><path d="M10 21.5l11 0l-9 -3.500z" fill="#30303c" opacity=".55"/><path d="M6.5 6.5V17.7A5.25 2.3 0 0 0 17.0 17.7V6.5" fill="url(#gBlueCyl)" stroke="#101828" stroke-width="1.3"/><ellipse cx="11.75" cy="6.5" rx="5.25" ry="2.3" fill="#88acec" stroke="#101828" stroke-width="1.3"/></svg></div>
<div class="tbi" style="left:429px"><svg width="24" height="24" viewBox="0 0 24 24"><path d="M10 21.5l11 0l-9 -3.500z" fill="#30303c" opacity=".55"/><path d="M6.5 6.5V17.7A5.25 2.3 0 0 0 17.0 17.7V6.5" fill="url(#gPaleCyl)" stroke="#30d8e8" stroke-width="1.2"/><ellipse cx="11.75" cy="6.5" rx="5.25" ry="2.3" fill="#e4ecf8" stroke="#30d8e8" stroke-width="1.2"/><path d="M6.5 17.7A5.25 2.3 0 0 1 17.0 17.7" fill="none" stroke="#30d8e8" stroke-width="0.96"/></svg></div>
<div class="tbi" style="left:455px"><svg width="24" height="24" viewBox="0 0 24 24"><path d="M10 21.5l11 0l-9 -3.500z" fill="#30303c" opacity=".55"/><path d="M6.5 6.5V17.7A5.25 2.3 0 0 0 17.0 17.7V6.5" fill="url(#gPaleCyl)" stroke="#384050" stroke-width="1.1"/><ellipse cx="11.75" cy="6.5" rx="5.25" ry="2.3" fill="#e4ecf8" stroke="#384050" stroke-width="1.1"/><path d="M6.5 17.7A5.25 2.3 0 0 1 17.0 17.7" fill="none" stroke="#384050" stroke-width="0.8800000000000001"/></svg></div>
<div class="tbi" style="left:481px"><svg width="24" height="24" viewBox="0 0 24 24"><path d="M6.5 6.5V17.7A5.25 2.3 0 0 0 17.0 17.7V6.5" fill="none" stroke="#222" stroke-width="1.1"/><ellipse cx="11.75" cy="6.5" rx="5.25" ry="2.3" fill="none" stroke="#222" stroke-width="1.1"/><path d="M6.5 17.7A5.25 2.3 0 0 1 17.0 17.7" fill="none" stroke="#222" stroke-width="0.8800000000000001"/><path d="M8 6L11 20M11 6L9 20M13 6L15 20M15.500 6L12 20M9 9L15 17" stroke="#333" stroke-width=".6" fill="none"/></svg></div>
<div class="tbi" style="left:506px"><svg width="24" height="24" viewBox="0 0 24 24"><path d="M2 4.3V12.7A4.5 2.3 0 0 0 11 12.7V4.3" fill="#f4f4f4" stroke="#333" stroke-width="1"/><ellipse cx="6.5" cy="4.3" rx="4.5" ry="2.3" fill="#f4f4f4" stroke="#333" stroke-width="1"/><path d="M2 12.7A4.5 2.3 0 0 1 11 12.7" fill="none" stroke="#333" stroke-width="0.8"/><path d="M12 10.3V19.7A5.0 2.3 0 0 0 22 19.7V10.3" fill="url(#gBlueCyl)" stroke="#101828" stroke-width="1.1"/><ellipse cx="17.0" cy="10.3" rx="5.0" ry="2.3" fill="#88acec" stroke="#101828" stroke-width="1.1"/><path d="M12 3.500C14 1.500 17 2 18 4L19.500 3L19.500 7.500L15 7L16.500 5.500C15.500 4 14 4 13 5z" fill="#40c028" stroke="#187810" stroke-width=".5"/><path d="M10 20C8 22 5 21.500 4 19.500L2.500 20.500L2.500 16L7 16.500L5.500 18C6.500 19.500 8 19.500 9 18.500z" fill="#40c028" stroke="#187810" stroke-width=".5"/></svg></div>
<div class="tbi" style="left:532px"><svg width="24" height="24" viewBox="0 0 24 24"><path d="M3 4.8V16.2A5.0 2.3 0 0 0 13 16.2V4.8" fill="url(#gBlueCyl)" stroke="#101828" stroke-width="1.2"/><ellipse cx="8.0" cy="4.8" rx="5.0" ry="2.3" fill="#88acec" stroke="#101828" stroke-width="1.2"/><g transform="translate(9 9) scale(0.6)"><path d="M3 11C2 5 8 1.500 14 4.500L16 2L17.500 10L9.500 9.500L12 7C9 5.500 6 7 6.500 11z" fill="url(#gBlueArrow)" stroke="#3868b0" stroke-width=".7"/><path d="M21 12C22 18 16 21.500 10 18.500L8 21L6.500 13L14.500 13.500L12 16C15 17.500 18 16 17.500 12z" fill="url(#gBlueArrow)" stroke="#3868b0" stroke-width=".7"/></g></svg></div>
<div class="tbi" style="left:558px"><svg width="24" height="24" viewBox="0 0 24 24"><rect x="2.500" y="3.500" width="17" height="13" fill="#3c5890" stroke="#6c7c98" stroke-width="1.400"/><rect x="4" y="5" width="14" height="10" fill="#28407c"/><path d="M8 19.500h7" stroke="#8c98b0" stroke-width="2"/><path d="M6 6.500L19 19.500" stroke="#b0b8c8" stroke-width="2.600" stroke-linecap="round"/><circle cx="6.500" cy="7" r="3" fill="#c8d0dc" stroke="#788498" stroke-width=".6"/><path d="M4 4.500l3 3" stroke="#3c5890" stroke-width="1.800"/><path d="M19 5L11 13" stroke="#dce4f0" stroke-width="1.600"/><path d="M11 13L6.500 19.500" stroke="#4878c8" stroke-width="2.800" stroke-linecap="round"/></svg></div>
<div class="tbi" style="left:600px"><svg width="24" height="24" viewBox="0 0 24 24"><g transform="translate(0 0)"><path d="M11.500 5.500L16 3.500L22 5L22 11L17.500 13L11.500 11.500z" fill="#f4f4f4" stroke="#333" stroke-width=".8"/><path d="M11.500 5.500L17.500 7L22 5M17.500 7V13" fill="none" stroke="#333" stroke-width=".8"/><path d="M2 5.500L7 3L14 5L14 12L9 14.500L2 12.500z" fill="#a8a8a8" stroke="#333" stroke-width=".8"/><path d="M2 5.500L9 7.500L14 5L7 3z" fill="url(#gCubeTop)" stroke="#333" stroke-width=".8"/><path d="M9 7.500V14.500" stroke="#333" stroke-width=".8"/><path d="M9 7.500L14 5V12L9 14.500z" fill="#787878" stroke="#333" stroke-width=".8"/></g><path d="M1.5 17.0h8M5.5 13v8" stroke="#58d020" stroke-width="2.6" fill="none"/><g transform="translate(12.5 12.5)"><path d="M1 9.500L7 4.500" stroke="#3c7cd8" stroke-width="1.800" fill="none"/><path d="M4 1.500a3.600 3.600 0 1 1 0 7" stroke="#3c7cd8" stroke-width="1.800" fill="none"/><path d="M5.500 0L2 1.800L5.200 4z" fill="#3c7cd8"/></g></svg></div>
<div class="tbi" style="left:626px"><svg width="24" height="24" viewBox="0 0 24 24"><g transform="translate(0 0)"><path d="M11.500 5.500L16 3.500L22 5L22 11L17.500 13L11.500 11.500z" fill="#f4f4f4" stroke="#333" stroke-width=".8"/><path d="M11.500 5.500L17.500 7L22 5M17.500 7V13" fill="none" stroke="#333" stroke-width=".8"/><path d="M2 5.500L7 3L14 5L14 12L9 14.500L2 12.500z" fill="#a8a8a8" stroke="#333" stroke-width=".8"/><path d="M2 5.500L9 7.500L14 5L7 3z" fill="url(#gCubeTop)" stroke="#333" stroke-width=".8"/><path d="M9 7.500V14.500" stroke="#333" stroke-width=".8"/><path d="M9 7.500L14 5V12L9 14.500z" fill="#787878" stroke="#333" stroke-width=".8"/></g><rect x="3" y="9.5" width="6.500" height="13" rx="2.500" fill="#141414"/><circle cx="6.25" cy="13.1" r="2.200" fill="#f0c020"/><circle cx="6.25" cy="18.9" r="2.200" fill="#20d020"/><circle cx="5.6" cy="12.5" r=".8" fill="#fff" opacity=".7"/><circle cx="5.6" cy="18.3" r=".8" fill="#fff" opacity=".7"/><rect x="14.5" y="9.5" width="6.500" height="13" rx="2.500" fill="#141414"/><circle cx="17.75" cy="13.1" r="2.200" fill="#e82020"/><circle cx="17.75" cy="18.9" r="2.200" fill="#f0c020"/><circle cx="17.1" cy="12.5" r=".8" fill="#fff" opacity=".7"/><circle cx="17.1" cy="18.3" r=".8" fill="#fff" opacity=".7"/></svg></div>
<div class="tbi" style="left:652px"><svg width="24" height="24" viewBox="0 0 24 24"><g transform="translate(0 0)"><path d="M11.500 5.500L16 3.500L22 5L22 11L17.500 13L11.500 11.500z" fill="#f4f4f4" stroke="#333" stroke-width=".8"/><path d="M11.500 5.500L17.500 7L22 5M17.500 7V13" fill="none" stroke="#333" stroke-width=".8"/><path d="M2 5.500L7 3L14 5L14 12L9 14.500L2 12.500z" fill="#a8a8a8" stroke="#333" stroke-width=".8"/><path d="M2 5.500L9 7.500L14 5L7 3z" fill="url(#gCubeTop)" stroke="#333" stroke-width=".8"/><path d="M9 7.500V14.500" stroke="#333" stroke-width=".8"/><path d="M9 7.500L14 5V12L9 14.500z" fill="#787878" stroke="#333" stroke-width=".8"/></g><g transform="translate(4 9.5) scale(1.2)"><path d="M1.500 6.500C2 2 8 .500 11 3.500L13 1.500L13.500 8L7.500 7L9.500 5.200C7.500 3.500 4.500 4.500 4 7z" fill="#58c838" stroke="#1c7c18" stroke-width=".6"/><path d="M13 6C12.500 10.500 6.500 12 3.500 9L1.500 11L1 4.500L7 5.500L5 7.300C7 9 10 8 10.500 5.500z" fill="#f0e020" stroke="#a09000" stroke-width=".6"/></g></svg></div>
<div class="tbi" style="left:678px"><svg width="24" height="24" viewBox="0 0 24 24"><g transform="translate(0 0)"><path d="M11.500 5.500L16 3.500L22 5L22 11L17.500 13L11.500 11.500z" fill="#f4f4f4" stroke="#333" stroke-width=".8"/><path d="M11.500 5.500L17.500 7L22 5M17.500 7V13" fill="none" stroke="#333" stroke-width=".8"/><path d="M2 5.500L7 3L14 5L14 12L9 14.500L2 12.500z" fill="#a8a8a8" stroke="#333" stroke-width=".8"/><path d="M2 5.500L9 7.500L14 5L7 3z" fill="url(#gCubeTop)" stroke="#333" stroke-width=".8"/><path d="M9 7.500V14.500" stroke="#333" stroke-width=".8"/><path d="M9 7.500L14 5V12L9 14.500z" fill="#787878" stroke="#333" stroke-width=".8"/></g><path d="M2 12.5h7M5.5 9v7" stroke="#58d020" stroke-width="2.4" fill="none"/><path d="M6 22L13 12" stroke="#222" stroke-width="1.300"/><path d="M11 20.5h8" stroke="#e8e000" stroke-width="2.6" fill="none"/><path d="M11 21.9h8" stroke="#a8a000" stroke-width=".6" fill="none"/></svg></div>
<div class="tbi" style="left:705px"><svg width="24" height="24" viewBox="0 0 24 24"><path d="M10 21.5l11 0l-9 -3.500z" fill="#30303c" opacity=".55"/><path d="M6.5 6.5V17.7A5.25 2.3 0 0 0 17.0 17.7V6.5" fill="url(#gBlueCyl)" stroke="#101828" stroke-width="1.3"/><ellipse cx="11.75" cy="6.5" rx="5.25" ry="2.3" fill="#88acec" stroke="#101828" stroke-width="1.3"/><path d="M11.500 8V20" stroke="#101828" stroke-width="1.300" stroke-dasharray="2.500 1.500"/></svg></div>
<div class="tbi" style="left:731px"><svg width="24" height="24" viewBox="0 0 24 24"><path d="M10 21.5l11 0l-9 -3.500z" fill="#30303c" opacity=".55"/><path d="M6.5 6.5V17.7A5.25 2.3 0 0 0 17.0 17.7V6.5" fill="url(#gGreyCyl)" stroke="#101828" stroke-width="1.3"/><ellipse cx="11.75" cy="6.5" rx="5.25" ry="2.3" fill="#a8bce0" stroke="#101828" stroke-width="1.3"/><path d="M10.300 7V20.500M13.500 7V20.500" stroke="#f0e030" stroke-width="1.300"/></svg></div>
<div class="tbi" style="left:757px"><svg width="24" height="24" viewBox="0 0 24 24"><path d="M10 21.5l11 0l-9 -3.500z" fill="#30303c" opacity=".55"/><path d="M6.5 6.5V17.7A5.25 2.3 0 0 0 17.0 17.7V6.5" fill="url(#gPaleCyl)" stroke="#30d8e8" stroke-width="1.2"/><ellipse cx="11.75" cy="6.5" rx="5.25" ry="2.3" fill="#e4ecf8" stroke="#30d8e8" stroke-width="1.2"/><path d="M6.5 17.7A5.25 2.3 0 0 1 17.0 17.7" fill="none" stroke="#30d8e8" stroke-width="0.96"/><path d="M8 12.500L11.500 18L18 7.500" stroke="#38b028" stroke-width="3" fill="none" stroke-linecap="round" stroke-linejoin="round"/></svg></div>
<div class="tbi" style="left:783px"><svg width="24" height="24" viewBox="0 0 24 24"><path d="M2 21l10 0l-8 -3.500z" fill="#30303c" opacity=".55"/><path d="M6 6.8V18.7A5.5 2.3 0 0 0 17 18.7V6.8" fill="url(#gPaleCyl)" stroke="#30d8e8" stroke-width="1.2"/><ellipse cx="11.5" cy="6.8" rx="5.5" ry="2.3" fill="#e4ecf8" stroke="#30d8e8" stroke-width="1.2"/><path d="M6 18.7A5.5 2.3 0 0 1 17 18.7" fill="none" stroke="#30d8e8" stroke-width="0.96"/><path d="M14 2H20V8L18 8L14 4z" fill="#f0a830" stroke="#a86810" stroke-width=".8"/><circle cx="17.500" cy="4.500" r="1.300" fill="#fff" stroke="#e02020" stroke-width=".8"/></svg></div>
<div class="tbi" style="left:809px"><svg width="24" height="24" viewBox="0 0 24 24"><path d="M6.5 6.5V17.7A5.25 2.3 0 0 0 17.0 17.7V6.5" fill="#e8f0fc" stroke="#58a0e0" stroke-width="1"/><ellipse cx="11.75" cy="6.5" rx="5.25" ry="2.3" fill="#e8f0fc" stroke="#58a0e0" stroke-width="1"/><path d="M6.5 17.7A5.25 2.3 0 0 1 17.0 17.7" fill="none" stroke="#58a0e0" stroke-width="0.8"/><path d="M8 6L11 20M11 6L9 20M13 6L15 20M15.500 6L12 20M9 9L15 17M8 14L14 8" stroke="#58a0e0" stroke-width=".6" fill="none"/></svg></div>
<div class="tbi" style="left:835px"><svg width="24" height="24" viewBox="0 0 24 24"><path d="M4 7L12 3.500L21 6.500L20 14.500L12.500 21L4.500 15z" fill="#2858b8" stroke="#0c1428" stroke-width="1.200"/><path d="M4 7L12 3.500L21 6.500L12.500 10z" fill="#88b4f0" stroke="#0c1428" stroke-width="1"/><path d="M12.500 10L12.500 21L4.500 15L4 7z" fill="#4878d8" stroke="#0c1428" stroke-width="1"/><path d="M12.500 10L21 6.500L20 14.500L12.500 21z" fill="#183880"/></svg></div>
<div class="tbi" style="left:877px"><svg width="24" height="24" viewBox="0 0 24 24"><path d="M6.4 13.2L3 20" stroke="#8c8c94" stroke-width="3" stroke-linecap="round"/><path d="M6.4 13.2L3 20" stroke="#d8d8dc" stroke-width="1.200" stroke-linecap="round"/><circle cx="10" cy="9" r="6" fill="url(#gLens)" stroke="#7c94b8" stroke-width="1.500"/><path d="M12 8.500L20 6.500L22 9V17L14 19z" fill="#8c8c8c" stroke="#444" stroke-width=".7"/><path d="M14 11L22 9M14 11V19M14 11L12 8.500" stroke="#444" stroke-width=".7" fill="none"/><path d="M12 8.500L14 11L14 19L12 16.500z" fill="#606060"/><path d="M7.500 6.500L12 9L7.500 12z" fill="#d8e4f4" stroke="#7c94b8" stroke-width=".6"/><path d="M1 3.500h4.500M3.250 1.200v4.600M1 8h4.500" stroke="#111" stroke-width="1.100"/></svg></div>
<div class="tbi" style="left:903px"><svg width="24" height="24" viewBox="0 0 24 24"><path d="M7.4 13.7L4 20" stroke="#8c8c94" stroke-width="3" stroke-linecap="round"/><path d="M7.4 13.7L4 20" stroke="#d8d8dc" stroke-width="1.200" stroke-linecap="round"/><circle cx="11" cy="9.5" r="6" fill="url(#gLens)" stroke="#7c94b8" stroke-width="1.500"/><path d="M13 9L20 7.500L22 10V17.500L15 19.500z" fill="#8c8c8c" stroke="#444" stroke-width=".7"/><path d="M15 12L22 10M15 12V19.500" stroke="#444" stroke-width=".7"/><path d="M8.500 7L13 9.500L8.500 12.500z" fill="#d8e4f4" stroke="#7c94b8" stroke-width=".6"/><rect x="0.5" y="1.5" width="3.400" height="3.400" fill="#38b828"/><path d="M2 3l2.8 2.8" stroke="#38b828" stroke-width="1.300" fill="none"/><path d="M2.3 3.3l1.2 1.2" stroke="#d8ffd0" stroke-width=".7" fill="none"/><rect x="19.5" y="1.5" width="3.400" height="3.400" fill="#38b828"/><path d="M21 3l-2.8 2.8" stroke="#38b828" stroke-width="1.300" fill="none"/><path d="M20.7 3.3l-1.2 1.2" stroke="#d8ffd0" stroke-width=".7" fill="none"/><rect x="0.5" y="19.5" width="3.400" height="3.400" fill="#38b828"/><path d="M2 21l2.8 -2.8" stroke="#38b828" stroke-width="1.300" fill="none"/><path d="M2.3 20.7l1.2 -1.2" stroke="#d8ffd0" stroke-width=".7" fill="none"/><rect x="19.5" y="19.5" width="3.400" height="3.400" fill="#38b828"/><path d="M21 21l-2.8 -2.8" stroke="#38b828" stroke-width="1.300" fill="none"/><path d="M20.7 20.7l-1.2 -1.2" stroke="#d8ffd0" stroke-width=".7" fill="none"/></svg></div>
<div class="tbi" style="left:929px"><svg width="24" height="24" viewBox="0 0 24 24"><rect x="4.500" y="6" width="15" height="12.500" fill="url(#gBox)" stroke="#222" stroke-width="1.200"/><text x="12" y="16.300" font-size="9.500" font-weight="700" text-anchor="middle" fill="#182878" font-family="Liberation Sans,sans-serif">1:1</text><rect x="1.0" y="2.0" width="3.400" height="3.400" fill="#38b828"/><path d="M2.5 3.5l2.8 2.8" stroke="#38b828" stroke-width="1.300" fill="none"/><path d="M2.8 3.8l1.2 1.2" stroke="#d8ffd0" stroke-width=".7" fill="none"/><rect x="20.0" y="2.0" width="3.400" height="3.400" fill="#38b828"/><path d="M21.5 3.5l-2.8 2.8" stroke="#38b828" stroke-width="1.300" fill="none"/><path d="M21.2 3.8l-1.2 1.2" stroke="#d8ffd0" stroke-width=".7" fill="none"/><rect x="1.0" y="19.5" width="3.400" height="3.400" fill="#38b828"/><path d="M2.5 21l2.8 -2.8" stroke="#38b828" stroke-width="1.300" fill="none"/><path d="M2.8 20.7l1.2 -1.2" stroke="#d8ffd0" stroke-width=".7" fill="none"/><rect x="20.0" y="19.5" width="3.400" height="3.400" fill="#38b828"/><path d="M21.5 21l-2.8 -2.8" stroke="#38b828" stroke-width="1.300" fill="none"/><path d="M21.2 20.7l-1.2 -1.2" stroke="#d8ffd0" stroke-width=".7" fill="none"/></svg></div>
<div class="tbi" style="left:955px"><svg width="24" height="24" viewBox="0 0 24 24"><path d="M6 18.500L17.500 7" stroke="#2c9820" stroke-width="3.200"/><path d="M6 18.500L17.500 7" stroke="#58d040" stroke-width="1.400"/><path d="M13 5L21.500 3L19.500 11.500z" fill="#38b028" stroke="#1c7814" stroke-width=".7"/><circle cx="5.500" cy="19" r="3" fill="url(#gLens)" stroke="#555" stroke-width=".8"/><circle cx="5.500" cy="19" r="3" fill="#888" opacity=".45"/></svg></div>
<div class="tbi" style="left:981px"><svg width="24" height="24" viewBox="0 0 24 24"><path d="M3.500 12C3 6 9 2.500 14.500 5L16 2.500L18.500 10L11 9.500L12.800 7.300C10 6 6.500 8 6.500 12z" fill="url(#gGreen)" stroke="#14700c" stroke-width=".8"/><path d="M20.500 12C21 18 15 21.500 9.500 19L8 21.500L5.500 14L13 14.500L11.200 16.700C14 18 17.500 16 17.500 12z" fill="url(#gGreen)" stroke="#14700c" stroke-width=".8"/></svg></div>
<div class="tbi" style="left:1007px"><svg width="24" height="24" viewBox="0 0 24 24"><g transform="translate(2.2 1.8) scale(0.874 0.7789999999999999)"><path d="M1.500 9C5 3.500 17 2.500 22 7.500C18 11.500 7 12.500 1.500 9z" fill="#c4bcd4"/><path d="M5 8.500C7 3.500 17 3 19 7.500C16 11 8 11.500 5 8.500z" fill="#52709c"/><circle cx="12" cy="6.800" r="3.600" fill="#3c5888"/><circle cx="12" cy="6.800" r="1.900" fill="#101c38"/><circle cx="10.600" cy="5.500" r=".9" fill="#c8d8f0"/><path d="M1.200 9.200C5 2.800 17 1.300 22.300 7.600" fill="none" stroke="#182644" stroke-width="2" stroke-linecap="round"/><path d="M2 9.500C7 12.800 17 12 21.500 8.200" fill="none" stroke="#9c7c94" stroke-width=".8"/><path d="M4.500 4.800l-1.300-1.600M7.500 3.200l-.7-1.800M11.500 2.400l0-1.800M15.500 2.800l.8-1.600M19 4.500l1.400-1.300" stroke="#182644" stroke-width=".8" fill="none"/></g><circle cx="12" cy="16" r="6.800" fill="url(#gSmile)" stroke="#c08810" stroke-width=".7"/><circle cx="9.700" cy="14.500" r="1" fill="#3c2808"/><circle cx="14.300" cy="14.500" r="1" fill="#3c2808"/><path d="M8.500 17.500Q12 21 15.500 17.500" stroke="#3c2808" stroke-width="1" fill="none"/></svg></div>
<div class="tbi" style="left:1050px"><svg width="24" height="24" viewBox="0 0 24 24"><path d="M0 15L11 8L20 14L9 22z" fill="#e4ecf8" stroke="#a8b8d0" stroke-width=".7"/><path d="M8 16V4" stroke="#1868e8" stroke-width="1.800"/><path d="M5.5 5L8 0L10.5 5z" fill="#1868e8"/><path d="M8 16L16 10" stroke="#28a828" stroke-width="1.800"/><path d="M13.5 8.5L19 7.5L16.5 12.5z" fill="#28a828"/><path d="M8 16L15 21" stroke="#e02020" stroke-width="1.800"/><path d="M15.5 18L18.5 23.5L12.5 22.5z" fill="#e02020"/><circle cx="8" cy="16" r="2" fill="#e8e8e8" stroke="#666" stroke-width=".6"/></svg></div>
<div class="tbi" style="left:1076px"><svg width="24" height="24" viewBox="0 0 24 24"><path d="M11 7L17 4L23 8L17 12z" fill="#e4ecf8" stroke="#a8b8d0" stroke-width=".6"/><path d="M16 9V2.500" stroke="#1868e8" stroke-width="1.300"/><path d="M14.500 4L16 1L17.500 4z" fill="#1868e8"/><path d="M16 9L20 6.500" stroke="#28a828" stroke-width="1.200"/><path d="M16 9L20.500 11.500" stroke="#e02020" stroke-width="1.200"/><rect x="12" y="16" width="9" height="5" fill="#c8c8c8" stroke="#666" stroke-width=".8"/><path d="M4 20L12 11" stroke="#1c7814" stroke-width="4.500"/><path d="M4 20L12 11" stroke="#48c030" stroke-width="2.600"/><path d="M7.500 9L15.500 7.500L14 15.500z" fill="#48c030" stroke="#1c7814" stroke-width=".8"/><circle cx="4" cy="20" r="2" fill="#999" stroke="#555" stroke-width=".6"/></svg></div>
<div class="tbi" style="left:1102px"><svg width="24" height="24" viewBox="0 0 24 24"><path d="M11 7L17 4L23 8L17 12z" fill="#e4ecf8" stroke="#a8b8d0" stroke-width=".6"/><path d="M17 9V2.500" stroke="#1868e8" stroke-width="1.300"/><path d="M15.500 4L17 1L18.500 4z" fill="#1868e8"/><path d="M17 9L21 6.500" stroke="#28a828" stroke-width="1.200"/><path d="M17 9L21 11.500" stroke="#e02020" stroke-width="1.200"/><circle cx="17" cy="9" r="1.200" fill="#eee" stroke="#666" stroke-width=".5"/><path d="M2 11L8 9.500L7 12L12 17L9.500 19.500L4.500 14.500L2.500 16z" fill="#48c030" stroke="#1c7814" stroke-width=".8"/><path d="M13 22.500L7 23.500L8 21L5 18L7.500 15.500L10.500 18.500L12.500 17z" fill="#48c030" stroke="#1c7814" stroke-width=".8"/></svg></div>
<div class="tbi" style="left:1145px"><svg width="24" height="24" viewBox="0 0 24 24"><rect x="1.500" y="2.500" width="21" height="20" fill="#f4f4f4" stroke="#b0b4c0" stroke-width=".6"/><rect x="2.5" y="3.5" width="6" height="5.700" fill="#00d8f0"/><rect x="9.0" y="3.5" width="6" height="5.700" fill="#f0e000"/><rect x="15.5" y="3.5" width="6" height="5.700" fill="#00e020"/><rect x="2.5" y="9.7" width="6" height="5.700" fill="#f08000"/><rect x="9.0" y="9.7" width="6" height="5.700" fill="#a86400"/><rect x="15.5" y="9.7" width="6" height="5.700" fill="#f000e0"/><rect x="2.5" y="15.9" width="6" height="5.700" fill="#0020e0"/><rect x="9.0" y="15.9" width="6" height="5.700" fill="#00b020"/><rect x="15.5" y="15.9" width="6" height="5.700" fill="#888888"/></svg></div>
<div class="tbi" style="left:1171px"><svg width="24" height="24" viewBox="0 0 24 24"><rect x="4" y="2" width="16" height="20" fill="#f4f6fc" stroke="#7c8498" stroke-width="1.200"/><rect x="6" y="4" width="12" height="1.500" fill="#f0a020"/><rect x="6" y="7" width="12" height="1.300" fill="#78b0f0"/><rect x="6" y="9.500" width="12" height="1.300" fill="#a8c8f4"/><rect x="6.5" y="12.5" width="3.400" height="2.600" fill="#00d8f0"/><rect x="10.3" y="12.5" width="3.400" height="2.600" fill="#f0e000"/><rect x="14.1" y="12.5" width="3.400" height="2.600" fill="#00e020"/><rect x="6.5" y="15.5" width="3.400" height="2.600" fill="#f08000"/><rect x="10.3" y="15.5" width="3.400" height="2.600" fill="#a86400"/><rect x="14.1" y="15.5" width="3.400" height="2.600" fill="#f000e0"/><rect x="6.5" y="18.5" width="3.400" height="2.600" fill="#0020e0"/><rect x="10.3" y="18.5" width="3.400" height="2.600" fill="#00b020"/><rect x="14.1" y="18.5" width="3.400" height="2.600" fill="#888888"/></svg></div>
<div class="tbi" style="left:1197px"><svg width="24" height="24" viewBox="0 0 24 24"><circle cx="12" cy="12.500" r="10.500" fill="#6c9c40" stroke="#3c6420" stroke-width="1"/><circle cx="12" cy="12.500" r="9" fill="#88b058"/><path d="M7 7L18 19" stroke="#e8ecf0" stroke-width="2.600" stroke-linecap="round"/><circle cx="7" cy="7.500" r="2.800" fill="#e8ecf0"/><path d="M4.500 4.500l3 3.500" stroke="#88b058" stroke-width="1.800"/><path d="M18 6L11.500 13" stroke="#f4f4f4" stroke-width="1.500"/><path d="M11.500 13L6.500 19" stroke="#3c70c8" stroke-width="2.800" stroke-linecap="round"/></svg></div>
<div class="tbi" style="left:1223px"><svg width="24" height="24" viewBox="0 0 24 24"><rect x="2" y="2.500" width="20" height="19" fill="#dce8f8" stroke="#28407c" stroke-width="1.200"/><rect x="2.500" y="3" width="19" height="3" fill="#28407c"/><path d="M5 9h2M8.500 9h2M12 9h2M15.500 9h2" stroke="#d8b020" stroke-width="2"/><path d="M8 11L17 20" stroke="#98a4b8" stroke-width="2.400" stroke-linecap="round"/><circle cx="8" cy="11.500" r="2.300" fill="#b8c0d0"/><path d="M18 10L12.500 15.500" stroke="#8c98b0" stroke-width="1.400"/><path d="M12.500 15.500L8 20" stroke="#3c70c8" stroke-width="2.600" stroke-linecap="round"/></svg></div>
<div class="tbi" style="left:1249px"><svg width="24" height="24" viewBox="0 0 24 24"><rect x="3" y="4" width="17" height="16" fill="none" stroke="#1c2c6c" stroke-width="1.500" stroke-dasharray="1.500 2.500"/><path d="M7 12L13 5.500L21 4.500L22.500 9L17 13.500L10 15z" fill="#f0c890" stroke="#a06820" stroke-width=".8"/><path d="M11 9L17 7M12 11.500L18 9.500" stroke="#a06820" stroke-width=".7"/><circle cx="7" cy="17" r="3" fill="#f0e020" stroke="#2848c8" stroke-width=".8"/><path d="M5 17h4M7 15v4" stroke="#2848c8" stroke-width="1.200"/></svg></div>
<div class="tbi" style="left:1275px"><svg width="24" height="24" viewBox="0 0 24 24"><path d="M2 19L8 4.500L22 3L17 18.500z" fill="#4878d8" stroke="#2850a8" stroke-width="1.200"/><path d="M4.500 17L9.500 6L20 5L15.500 16.500z" fill="#f0a0a8"/><path d="M6.200 13.300L17 12.500M7.800 9.700L18.500 8.700M8 16.800L13 5.700M11.500 16.600L16.500 5.300" stroke="#d82030" stroke-width="1.300" fill="none"/><path d="M4.500 17L9.500 6L20 5L15.500 16.500z" fill="none" stroke="#d82030" stroke-width="1"/><path d="M2 19L17 18.500L17.500 20L2.500 20.500z" fill="#182c68"/></svg></div>
<div class="grp" style="left:86px;width:100px">属性/过滤器</div>
<div class="grp" style="left:377px;width:100px">图形</div>
<div class="grp" style="left:680px;width:100px">图像 (进阶)</div>
<div class="grp" style="left:905px;width:100px">视图</div>
<div class="grp" style="left:1039px;width:100px">工作平面</div>
<div class="grp" style="left:1173px;width:100px">系统</div>
<svg class="abs" style="left:0px;top:121px" width="59" height="4" viewBox="0 0 59 4"><rect width="59" height="4" fill="url(#pGrip)"/></svg>
<svg class="abs" style="left:0px;top:374px" width="59" height="4" viewBox="0 0 59 4"><rect width="59" height="4" fill="url(#pGrip)"/></svg>
<svg class="abs" style="left:5px;top:131px" width="24" height="24" viewBox="0 0 24 24"><g transform="translate(0 0)"><path d="M3 6.500L9 5M2.500 9.500L8 9M3 12.500L8.500 12.500" stroke="#a8b4c8" stroke-width="1.300" fill="none"/><path d="M11 14.500L5 21" stroke="#8c8c94" stroke-width="3" stroke-linecap="round"/><path d="M11 14.500L5 21" stroke="#dcdce0" stroke-width="1.200" stroke-linecap="round"/><ellipse cx="10" cy="9.500" rx="6" ry="5.500" fill="#d8e4f4" stroke="#a8b8d0" stroke-width="1" opacity=".6"/><circle cx="14" cy="10" r="6" fill="url(#gLens)" stroke="#7c98c0" stroke-width="1.500"/><path d="M10.500 8a4 4 0 0 1 4-2.500" stroke="#fff" stroke-width="1.200" fill="none"/></g></svg>
<svg class="abs" style="left:31px;top:131px" width="24" height="24" viewBox="0 0 24 24"><path d="M5 4L20 19M8 15L18 5" stroke="#3c7ce0" stroke-width="1.400" stroke-dasharray="4 2" fill="none"/><g transform="translate(7 19) rotate(-48.8)"><path d="M0 0L4 -1.800V1.800z" fill="#e8c890" stroke="#5c3c10" stroke-width=".4"/><path d="M0 0L1.500 -.7V.7z" fill="#222"/><rect x="4" y="-1.800" width="14.3" height="3.600" fill="#e8a030" stroke="#7c4c10" stroke-width=".5"/><rect x="4" y="-.6" width="14.3" height="1.200" fill="#f8d070"/><rect x="18.3" y="-1.800" width="1.200" height="3.600" fill="#c8c8c8"/><rect x="19.5" y="-1.800" width="1.800" height="3.600" rx=".8" fill="#e03030"/></g><ellipse cx="9" cy="20.500" rx="5" ry="1" fill="#555" opacity=".35"/><path d="M17 2.500h6.600l-3.300 3.200z" fill="#000"/></svg>
<svg class="abs" style="left:5px;top:157px" width="24" height="24" viewBox="0 0 24 24"><g transform="translate(0 0)"><rect x="5.500" y="6" width="13" height="12" fill="url(#gBox)" stroke="#8c8c8c" stroke-width=".8"/><path d="M5.500 18H18.500V6" stroke="#555" stroke-width=".9" fill="none"/><rect x="1.5" y="2.0" width="3.400" height="3.400" fill="#38b828"/><path d="M3 3.5l2.8 2.8" stroke="#38b828" stroke-width="1.300" fill="none"/><path d="M3.3 3.8l1.2 1.2" stroke="#d8ffd0" stroke-width=".7" fill="none"/><rect x="19.5" y="2.0" width="3.400" height="3.400" fill="#38b828"/><path d="M21 3.5l-2.8 2.8" stroke="#38b828" stroke-width="1.300" fill="none"/><path d="M20.7 3.8l-1.2 1.2" stroke="#d8ffd0" stroke-width=".7" fill="none"/><rect x="1.5" y="19.0" width="3.400" height="3.400" fill="#38b828"/><path d="M3 20.5l2.8 -2.8" stroke="#38b828" stroke-width="1.300" fill="none"/><path d="M3.3 20.2l1.2 -1.2" stroke="#d8ffd0" stroke-width=".7" fill="none"/><rect x="19.5" y="19.0" width="3.400" height="3.400" fill="#38b828"/><path d="M21 20.5l-2.8 -2.8" stroke="#38b828" stroke-width="1.300" fill="none"/><path d="M20.7 20.2l-1.2 -1.2" stroke="#d8ffd0" stroke-width=".7" fill="none"/></g></svg>
<svg class="abs" style="left:31px;top:157px" width="24" height="24" viewBox="0 0 24 24"><path d="M9 5.500C4 4 3 10 8 11.500C14 13.500 20 13 19 18C18 22 11 21 10 18" stroke="#3c7ce0" stroke-width="1.500" fill="none"/><g transform="translate(7 19) rotate(-48.8)"><path d="M0 0L4 -1.800V1.800z" fill="#e8c890" stroke="#5c3c10" stroke-width=".4"/><path d="M0 0L1.500 -.7V.7z" fill="#222"/><rect x="4" y="-1.800" width="14.3" height="3.600" fill="#e8a030" stroke="#7c4c10" stroke-width=".5"/><rect x="4" y="-.6" width="14.3" height="1.200" fill="#f8d070"/><rect x="18.3" y="-1.800" width="1.200" height="3.600" fill="#c8c8c8"/><rect x="19.5" y="-1.800" width="1.800" height="3.600" rx=".8" fill="#e03030"/></g><ellipse cx="9" cy="20.500" rx="5" ry="1" fill="#555" opacity=".35"/><path d="M17 2.500h6.600l-3.300 3.200z" fill="#000"/></svg>
<svg class="abs" style="left:5px;top:183px" width="24" height="24" viewBox="0 0 24 24"><path d="M6.4 13.2L3 20" stroke="#8c8c94" stroke-width="3" stroke-linecap="round"/><path d="M6.4 13.2L3 20" stroke="#d8d8dc" stroke-width="1.200" stroke-linecap="round"/><circle cx="10" cy="9" r="6" fill="url(#gLens)" stroke="#7c94b8" stroke-width="1.500"/><path d="M12 8.500L20 6.500L22 9V17L14 19z" fill="#8c8c8c" stroke="#444" stroke-width=".7"/><path d="M14 11L22 9M14 11V19M14 11L12 8.500" stroke="#444" stroke-width=".7" fill="none"/><path d="M12 8.500L14 11L14 19L12 16.500z" fill="#606060"/><path d="M7.500 6.500L12 9L7.500 12z" fill="#d8e4f4" stroke="#7c94b8" stroke-width=".6"/><path d="M1 3.500h4.500M3.250 1.200v4.600M1 8h4.500" stroke="#111" stroke-width="1.100"/><path d="M17 2.500h6.600l-3.300 3.200z" fill="#000"/></svg>
<svg class="abs" style="left:31px;top:183px" width="24" height="24" viewBox="0 0 24 24"><path d="M5.500 5.500H19.500V11.500H16.500V18.500H5.500z" fill="#f8f8e8" stroke="#e8e000" stroke-width="1.800"/><path d="M8 11.500L11.500 16.500L18 6.500" stroke="#38b028" stroke-width="3" fill="none" stroke-linecap="round" stroke-linejoin="round"/><path d="M17 2.500h6.600l-3.300 3.200z" fill="#000"/></svg>
<svg class="abs" style="left:5px;top:209px" width="24" height="24" viewBox="0 0 24 24"><path d="M1 16L12 9L21 15L10 23z" fill="#e4ecf8" stroke="#a8b8d0" stroke-width=".7"/><path d="M9 17V5" stroke="#1868e8" stroke-width="1.800"/><path d="M6.5 6L9 1L11.5 6z" fill="#1868e8"/><path d="M9 17L17 11" stroke="#28a828" stroke-width="1.800"/><path d="M14.5 9.5L20 8.5L17.5 13.5z" fill="#28a828"/><path d="M9 17L16 22" stroke="#e02020" stroke-width="1.800"/><path d="M16.5 19L19.5 24.5L13.5 23.5z" fill="#e02020"/><circle cx="9" cy="17" r="2" fill="#e8e8e8" stroke="#666" stroke-width=".6"/><path d="M17 2.500h6.600l-3.300 3.200z" fill="#000"/></svg>
<svg class="abs" style="left:31px;top:209px" width="24" height="24" viewBox="0 0 24 24"><path d="M3 13C4 3 9 3 10.500 12C12 21 18 22 20 12" stroke="#3c7ce0" stroke-width="1.500" fill="none"/><g transform="translate(7 19) rotate(-48.8)"><path d="M0 0L4 -1.800V1.800z" fill="#e8c890" stroke="#5c3c10" stroke-width=".4"/><path d="M0 0L1.500 -.7V.7z" fill="#222"/><rect x="4" y="-1.800" width="14.3" height="3.600" fill="#e8a030" stroke="#7c4c10" stroke-width=".5"/><rect x="4" y="-.6" width="14.3" height="1.200" fill="#f8d070"/><rect x="18.3" y="-1.800" width="1.200" height="3.600" fill="#c8c8c8"/><rect x="19.5" y="-1.800" width="1.800" height="3.600" rx=".8" fill="#e03030"/></g><ellipse cx="9" cy="20.500" rx="5" ry="1" fill="#555" opacity=".35"/><path d="M17 2.500h6.600l-3.300 3.200z" fill="#000"/></svg>
<svg class="abs" style="left:5px;top:235px" width="24" height="24" viewBox="0 0 24 24"><path d="M2 4L11 3L13 5L4 6.500z" fill="#5878f0" stroke="#2848c0" stroke-width=".5"/><path d="M2 7L11 6L13 8L4 9.500z" fill="#8ca4f4" stroke="#4060c8" stroke-width=".5"/><path d="M2 10L11 9L13 11L4 12.500z" fill="#d0d8f4" stroke="#7088c8" stroke-width=".5"/><path d="M3 6.600L12 5.600M3 9.600L12 8.600" stroke="#f8f8ff" stroke-width=".8"/><ellipse cx="12" cy="17" rx="8" ry="5" fill="#b88858" stroke="#6c4420" stroke-width=".8"/><ellipse cx="8" cy="15.500" rx="1.700" ry="1.300" fill="#f0e8d8"/><circle cx="15.500" cy="15" r="1.900" fill="#e02020"/><circle cx="14" cy="18.800" r="1.900" fill="#20b020"/><circle cx="9" cy="19" r="1.900" fill="#2040e0"/><path d="M21 3L13.500 13" stroke="#a05818" stroke-width="1.800" stroke-linecap="round"/><path d="M14.500 11.500L11.500 15.500L13 16z" fill="#444"/><path d="M17 2.500h6.600l-3.300 3.200z" fill="#000"/></svg>
<svg class="abs" style="left:31px;top:235px" width="24" height="24" viewBox="0 0 24 24"><path d="M3 20L8 6L22 3.500L17 18.500z" fill="#78a8f0" stroke="#3868c8" stroke-width="1.200"/><path d="M5.500 13L19.500 10.500M10 19.200L15 4.800" stroke="#e8f0fc" stroke-width="1.400"/><path d="M3 20L17 18.500L17.500 19.800L3.500 21.500z" fill="#2850a8"/><path d="M17 2.500h6.600l-3.300 3.200z" fill="#000"/></svg>
<svg class="abs" style="left:5px;top:261px" width="24" height="24" viewBox="0 0 24 24"><g transform="translate(0 0) scale(1)"><path d="M3 11C2 5 8 1.500 14 4.500L16 2L17.500 10L9.500 9.500L12 7C9 5.500 6 7 6.500 11z" fill="url(#gBlueArrow)" stroke="#3868b0" stroke-width=".7"/><path d="M21 12C22 18 16 21.500 10 18.500L8 21L6.500 13L14.500 13.500L12 16C15 17.500 18 16 17.500 12z" fill="url(#gBlueArrow)" stroke="#3868b0" stroke-width=".7"/></g><path d="M17 2.500h6.600l-3.300 3.200z" fill="#000"/></svg>
<svg class="abs" style="left:31px;top:261px" width="24" height="24" viewBox="0 0 24 24"><path d="M3 8L12 4.500L21 7.500V16.500L12 21L3 17z" fill="#a0a0a0" stroke="#505050" stroke-width=".8"/><path d="M3 8L12 4.500L21 7.500L12 11.500z" fill="url(#gCubeTop)" stroke="#505050" stroke-width=".7"/><path d="M12 11.500V21L21 16.500V7.500z" fill="#6c6c6c" stroke="#505050" stroke-width=".7"/><ellipse cx="12" cy="22" rx="8" ry="1" fill="#555" opacity=".3"/><path d="M17 2.500h6.600l-3.300 3.200z" fill="#000"/></svg>
<svg class="abs" style="left:5px;top:287px" width="24" height="24" viewBox="0 0 24 24"><text x="12" y="19" font-size="21" font-weight="700" text-anchor="middle" fill="#4878d0" stroke="#2850a8" stroke-width=".5" font-family="Liberation Sans,sans-serif">?</text><ellipse cx="12" cy="21.500" rx="5" ry="1" fill="#555" opacity=".3"/><path d="M17 2.500h6.600l-3.300 3.200z" fill="#000"/></svg>
<svg class="abs" style="left:31px;top:287px" width="24" height="24" viewBox="0 0 24 24"><path d="M4 5V21M20 5V21" stroke="#111" stroke-width="1.400"/><path d="M5 8.500H19" stroke="#111" stroke-width="1"/><path d="M5 8.500L8.500 6.500V10.500zM19 8.500L15.500 6.500V10.500z" fill="#f0e000" stroke="#111" stroke-width=".6"/><path d="M17 2.500h6.600l-3.300 3.200z" fill="#000"/></svg>
<svg class="abs" style="left:5px;top:313px" width="24" height="24" viewBox="0 0 24 24"><path d="M6 8H18L16.500 21H7.500z" fill="#a8d0f0" stroke="#5888b8" stroke-width=".9"/><ellipse cx="12" cy="8" rx="6.500" ry="1.800" fill="#d8ecfc" stroke="#5888b8" stroke-width=".9"/><path d="M9 11L10 19M12 11V19M15 11L14 19" stroke="#88b8e0" stroke-width=".9"/><path d="M9 6.500L11 3L13.500 4L15 7" fill="#e8d830" stroke="#555" stroke-width=".7"/><path d="M9.500 13l2 2 3-3.500" stroke="#e8e040" stroke-width="1" fill="none"/><path d="M17 2.500h6.600l-3.300 3.200z" fill="#000"/></svg>
<svg class="abs" style="left:31px;top:313px" width="24" height="24" viewBox="0 0 24 24"><g transform="translate(2 2)"><g transform=""><path d="M2 7.500L8.500 2V5.500C14 5.500 16.500 9 15.500 13C14.800 15.500 12.500 17 10 17.500C12 15.500 12.500 13 11.500 11.500C10.800 10.300 9.800 10 8.500 10V13.500z" fill="#b0b0b0" stroke="#888" stroke-width=".7"/><ellipse cx="11" cy="18.500" rx="6" ry="1" fill="#888" opacity=".35"/></g></g><path d="M17 2.500h6.600l-3.300 3.200z" fill="#000"/></svg>
<svg class="abs" style="left:5px;top:339px" width="24" height="24" viewBox="0 0 24 24"><path d="M3 2V21" stroke="#333" stroke-width="1.600"/><path d="M5 3V20" stroke="#888" stroke-width="1"/><circle cx="13" cy="11" r="6.500" fill="none" stroke="#e87818" stroke-width="2"/><circle cx="13" cy="11" r="2" fill="#e87818"/><path d="M13 1.500V20.500M3.500 11H22.500M6.300 4.300L19.700 17.700M19.700 4.300L6.300 17.700" stroke="#e87818" stroke-width="1.300"/><path d="M2 19L8 17L14 19L10 22L3 22z" fill="#f09030" stroke="#c06010" stroke-width=".6"/><path d="M4 18.500L6 22M7 17.500L9.500 22M10 18L12 20.500" stroke="#fff" stroke-width=".7"/><path d="M17 2.500h6.600l-3.300 3.200z" fill="#000"/></svg>
<svg class="abs" style="left:31px;top:339px" width="24" height="24" viewBox="0 0 24 24"><path d="M6 12H20V22H6z" fill="#fcfcfc" stroke="#111" stroke-width="1.200"/><path d="M16 12V16H20" fill="none" stroke="#111" stroke-width=".8"/><path d="M2 5H8L9.500 6.500H17V15H2z" fill="#e8b848" stroke="#b08020" stroke-width=".7"/><path d="M2 15L4 8.500H19.500L17 15z" fill="url(#gFolder)" stroke="#b08020" stroke-width=".7"/><path d="M9 7.500C9.500 4.500 12.500 3.500 15 4.500L15.500 3L18.500 7L14 8L14.500 6.500C13 6 11.500 6.500 11 8z" fill="#38b028" stroke="#187810" stroke-width=".6"/></svg>
<div id="viewport">
<div class="vb" style="left:4px;top:4px"><svg width="24" height="24" viewBox="0 0 24 24"><rect x="3" y="4" width="18" height="4" fill="#4d6082"/><rect x="3" y="10" width="18" height="4" fill="#4d6082"/><rect x="3" y="16" width="18" height="4" fill="#4d6082"/><path d="M4 6h16M4 12h16M4 18h16" stroke="#6c80a4" stroke-width=".8"/></svg></div>
<div class="vb" style="left:32px;top:4px"><svg width="24" height="24" viewBox="0 0 24 24"><g transform="translate(0 0)"><rect x="5.500" y="6" width="13" height="12" fill="url(#gBox)" stroke="#8c8c8c" stroke-width=".8"/><path d="M5.500 18H18.500V6" stroke="#555" stroke-width=".9" fill="none"/><rect x="1.5" y="2.0" width="3.400" height="3.400" fill="#38b828"/><path d="M3 3.5l2.8 2.8" stroke="#38b828" stroke-width="1.300" fill="none"/><path d="M3.3 3.8l1.2 1.2" stroke="#d8ffd0" stroke-width=".7" fill="none"/><rect x="19.5" y="2.0" width="3.400" height="3.400" fill="#38b828"/><path d="M21 3.5l-2.8 2.8" stroke="#38b828" stroke-width="1.300" fill="none"/><path d="M20.7 3.8l-1.2 1.2" stroke="#d8ffd0" stroke-width=".7" fill="none"/><rect x="1.5" y="19.0" width="3.400" height="3.400" fill="#38b828"/><path d="M3 20.5l2.8 -2.8" stroke="#38b828" stroke-width="1.300" fill="none"/><path d="M3.3 20.2l1.2 -1.2" stroke="#d8ffd0" stroke-width=".7" fill="none"/><rect x="19.5" y="19.0" width="3.400" height="3.400" fill="#38b828"/><path d="M21 20.5l-2.8 -2.8" stroke="#38b828" stroke-width="1.300" fill="none"/><path d="M20.7 20.2l-1.2 -1.2" stroke="#d8ffd0" stroke-width=".7" fill="none"/></g></svg></div>
<div class="vb" style="left:60px;top:4px"><svg width="24" height="24" viewBox="0 0 24 24"><g transform="translate(0 0)"><path d="M3 6.500L9 5M2.500 9.500L8 9M3 12.500L8.500 12.500" stroke="#a8b4c8" stroke-width="1.300" fill="none"/><path d="M11 14.500L5 21" stroke="#8c8c94" stroke-width="3" stroke-linecap="round"/><path d="M11 14.500L5 21" stroke="#dcdce0" stroke-width="1.200" stroke-linecap="round"/><ellipse cx="10" cy="9.500" rx="6" ry="5.500" fill="#d8e4f4" stroke="#a8b8d0" stroke-width="1" opacity=".6"/><circle cx="14" cy="10" r="6" fill="url(#gLens)" stroke="#7c98c0" stroke-width="1.500"/><path d="M10.500 8a4 4 0 0 1 4-2.500" stroke="#fff" stroke-width="1.200" fill="none"/></g></svg></div>
<div class="vb" style="left:88px;top:4px"><svg width="24" height="24" viewBox="0 0 24 24"><path d="M2 14L11 8L22 14L13 21z" fill="#8c90a4" stroke="#70748c" stroke-width=".7"/><path d="M11.500 15V5" stroke="#1868e8" stroke-width="1.800"/><path d="M9 6.500L11.500 1.500L14 6.500z" fill="#1868e8"/><path d="M11.500 15L17 11" stroke="#28a828" stroke-width="1.700"/><path d="M15 9.500L20 9L17.500 13.500z" fill="#28a828"/><path d="M11.500 15L17 19" stroke="#e02020" stroke-width="1.700"/><path d="M17.500 16L20.500 21.500L14.500 20.500z" fill="#e02020"/><circle cx="11.500" cy="15" r="2" fill="#e8e8e8" stroke="#555" stroke-width=".6"/></svg></div>
<div class="vb" style="left:116px;top:4px"><svg width="24" height="24" viewBox="0 0 24 24"><path d="M12 4.500V14 M3 16.500L12 14L21 16.500" fill="none" stroke="#0a0a0a" stroke-width="1.200"/><path d="M3 8L12 4.500L21 8L12 11.500z" fill="url(#gGrCube)"/><path d="M3 8L12 4.500L21 8V16.500L12 21L3 16.500z M3 8L12 11.500L21 8 M12 11.500V21" fill="none" stroke="#0a0a0a" stroke-width="1.200" stroke-linejoin="round"/></svg></div>
<div class="vb" style="left:144px;top:4px"><svg width="24" height="24" viewBox="0 0 24 24"><path d="M3 16.500L12 14L21 16.500L12 21z" fill="url(#gGrCube)"/><path d="M3 8L12 4.500L21 8V16.500L12 21L3 16.500z M3 8L12 11.500L21 8 M12 11.500V21 M12 4.500V14 M3 16.500L12 14L21 16.500" fill="none" stroke="#0a0a0a" stroke-width="1.200" stroke-linejoin="round"/></svg></div>
<div class="vb" style="left:172px;top:4px"><svg width="24" height="24" viewBox="0 0 24 24"><path d="M12 4.500V14 M3 16.500L12 14L21 16.500" fill="none" stroke="#0a0a0a" stroke-width="1.200"/><path d="M3 8L12 11.500V21L3 16.500z" fill="url(#gGrCube)"/><path d="M3 8L12 4.500L21 8V16.500L12 21L3 16.500z M3 8L12 11.500L21 8 M12 11.500V21" fill="none" stroke="#0a0a0a" stroke-width="1.200" stroke-linejoin="round"/></svg></div>
<div class="vb" style="left:200px;top:4px"><svg width="24" height="24" viewBox="0 0 24 24"><path d="M12 4.500V14 M3 16.500L12 14L21 16.500" fill="none" stroke="#0a0a0a" stroke-width="1.200"/><path d="M12 11.500L21 8V16.500L12 21z" fill="url(#gGrCube)"/><path d="M3 8L12 4.500L21 8V16.500L12 21L3 16.500z M3 8L12 11.500L21 8 M12 11.500V21" fill="none" stroke="#0a0a0a" stroke-width="1.200" stroke-linejoin="round"/></svg></div>
<div class="vb" style="left:228px;top:4px"><svg width="24" height="24" viewBox="0 0 24 24"><path d="M12 4.500V14 M3 16.500L12 14L21 16.500" fill="none" stroke="#0a0a0a" stroke-width="1.200"/><path d="M3 8L12 11.500V21L3 16.500z" fill="url(#gGrCube)"/><path d="M3 8L12 4.500L21 8V16.500L12 21L3 16.500z M3 8L12 11.500L21 8 M12 11.500V21" fill="none" stroke="#0a0a0a" stroke-width="1.200" stroke-linejoin="round"/></svg></div>
<div class="vb" style="left:256px;top:4px"><svg width="24" height="24" viewBox="0 0 24 24"><path d="M12 4.500L21 8V16.500L12 14z" fill="url(#gGrCube)"/><path d="M3 8L12 4.500L21 8V16.500L12 21L3 16.500z M3 8L12 11.500L21 8 M12 11.500V21 M12 4.500V14 M3 16.500L12 14L21 16.500" fill="none" stroke="#0a0a0a" stroke-width="1.200" stroke-linejoin="round"/></svg></div>
<div class="vb" style="left:284px;top:4px"><svg width="24" height="24" viewBox="0 0 24 24"><path d="M3 8L12 4.500L21 8V16.500L12 21L3 16.500z" fill="#30c020" stroke="#188010" stroke-width=".8"/><path d="M3 8L12 4.500L21 8L12 11.500z" fill="#78f058"/><path d="M12 11.500L21 8V16.500L12 21z" fill="#1c9c14"/><path d="M3 8L12 11.500L21 8M12 11.500V21" stroke="#188010" stroke-width=".7" fill="none"/></svg></div>
<div class="vb" style="left:4px;top:32px"><svg width="24" height="24" viewBox="0 0 24 24"><path d="M7.5 6.3V17.7A4.5 2.3 0 0 0 16.5 17.7V6.3" fill="none" stroke="#15151c" stroke-width="1.1"/><ellipse cx="12.0" cy="6.3" rx="4.5" ry="2.3" fill="none" stroke="#15151c" stroke-width="1.1"/><path d="M7.5 17.7A4.5 2.3 0 0 1 16.5 17.7" fill="none" stroke="#15151c" stroke-width="0.8800000000000001"/></svg></div>
<div class="vb" style="left:4px;top:60px"><svg width="24" height="24" viewBox="0 0 24 24"><path d="M7.5 6.3V17.7A4.5 2.3 0 0 0 16.5 17.7V6.3" fill="none" stroke="#15151c" stroke-width="1.1"/><ellipse cx="12.0" cy="6.3" rx="4.5" ry="2.3" fill="none" stroke="#15151c" stroke-width="1.1"/><path d="M7.500 17.700A4.500 2.300 0 0 0 16.500 17.700" fill="none" stroke="#15151c" stroke-width="1.100"/></svg></div>
<div class="vb on" style="left:4px;top:88px"><svg width="24" height="24" viewBox="0 0 24 24"><path d="M11 22l10 0l-8 -3.500z" fill="#30303c" opacity=".55"/><path d="M7.5 6.3V17.7A4.5 2.3 0 0 0 16.5 17.7V6.3" fill="url(#gBlueCyl)" stroke="#203878" stroke-width="0.8"/><ellipse cx="12.0" cy="6.3" rx="4.5" ry="2.3" fill="#88acec" stroke="#203878" stroke-width="0.8"/></svg></div>
<div class="vb" style="left:4px;top:116px"><svg width="24" height="24" viewBox="0 0 24 24"><path d="M7.5 6.3V17.7A4.5 2.3 0 0 0 16.5 17.7V6.3" fill="url(#gPaleCyl)" stroke="#303848" stroke-width="1"/><ellipse cx="12.0" cy="6.3" rx="4.5" ry="2.3" fill="#f0f4fc" stroke="#303848" stroke-width="1"/><path d="M7.5 17.7A4.5 2.3 0 0 1 16.5 17.7" fill="none" stroke="#303848" stroke-width="0.8"/></svg></div>
<div class="vb" style="left:4px;top:144px"><svg width="24" height="24" viewBox="0 0 24 24"><path d="M7.5 6.3V17.7A4.5 2.3 0 0 0 16.5 17.7V6.3" fill="none" stroke="#15151c" stroke-width="1"/><ellipse cx="12.0" cy="6.3" rx="4.5" ry="2.3" fill="none" stroke="#15151c" stroke-width="1"/><path d="M7.5 17.7A4.5 2.3 0 0 1 16.5 17.7" fill="none" stroke="#15151c" stroke-width="0.8"/><path d="M9 6L11.500 20M11 6L9.500 20M13 6L14.500 20M15 6L12.500 20M9.500 9L15 17" stroke="#15151c" stroke-width=".6" fill="none"/></svg></div>
<svg class="abs" style="left:0;top:0" width="1860" height="892" viewBox="60 109 1860 892">
<defs>
<linearGradient id="cylg" x1="0" x2="1" y1="0" y2="0"><stop offset="0" stop-color="#cfcfcf"/><stop offset=".22" stop-color="#ffffff"/><stop offset=".5" stop-color="#f4f4f4"/><stop offset=".8" stop-color="#b4b4b4"/><stop offset="1" stop-color="#6e6e6e"/></linearGradient>
<linearGradient id="postg" x1="0" x2="1" y1="0" y2="0"><stop offset="0" stop-color="#a8a8bc"/><stop offset=".4" stop-color="#e4e4f0"/><stop offset="1" stop-color="#8c8ca2"/></linearGradient>
<linearGradient id="plateg" x1="0" x2="1" y1="0" y2="0"><stop offset="0" stop-color="#b0b0c4"/><stop offset=".15" stop-color="#8e8ea4"/><stop offset=".4" stop-color="#e8e8f4"/><stop offset=".8" stop-color="#c0c0d2"/><stop offset="1" stop-color="#70708a"/></linearGradient>
<linearGradient id="forkg" x1="0" x2="1" y1="0" y2="0"><stop offset="0" stop-color="#c8c8da"/><stop offset=".35" stop-color="#eeeefa"/><stop offset="1" stop-color="#7c7c92"/></linearGradient>
<linearGradient id="forkg2" x1="1" x2="0" y1="0" y2="0"><stop offset="0" stop-color="#c8c8da"/><stop offset=".35" stop-color="#eeeefa"/><stop offset="1" stop-color="#7c7c92"/></linearGradient>
<linearGradient id="railL" x1="0" x2="1" y1="0" y2="0"><stop offset="0" stop-color="#e8e8e8"/><stop offset=".4" stop-color="#ffffff"/><stop offset="1" stop-color="#e0e0e0"/></linearGradient>
<linearGradient id="railR" x1="0" x2="1" y1="0" y2="0"><stop offset="0" stop-color="#f4f4f4"/><stop offset=".5" stop-color="#c0c0c0"/><stop offset="1" stop-color="#5a5a5a"/></linearGradient>
<linearGradient id="wm" x1="0" x2="0" y1="0" y2="1"><stop offset="0" stop-color="#ff8c1a"/><stop offset="1" stop-color="#f0a030"/></linearGradient>
<linearGradient id="bgv" gradientUnits="userSpaceOnUse" x1="0" y1="109" x2="0" y2="1001"><stop offset="0" stop-color="#01011b"/><stop offset="1" stop-color="#46638b"/></linearGradient>
</defs>
<g transform="matrix(1 0.006 0 1 0 -5.148)" shape-rendering="crispEdges">
<rect x="858" y="119" width="666" height="270" fill="#6e00da"/>
<rect x="858" y="119" width="6" height="269" fill="#5800b6"/>
<path d="M855.500 388H1525.500L1524 659H853.500z" fill="#6e00da"/>
<path d="M855.500 388H865.500L863.500 659H853.500z" fill="#5800b6"/>
<path d="M858 119L1524 119" stroke="#000" stroke-width="1.30" fill="none"/>
<path d="M858.5 119L858.5 388" stroke="#000" stroke-width="1.30" fill="none"/>
<path d="M864 134L864 388" stroke="#000" stroke-width="0.78" fill="none"/>
<path d="M1524 119L1524 388" stroke="#000" stroke-width="1.56" fill="none"/>
<path d="M855.5 388.5L1525.5 388.5" stroke="#000" stroke-width="1.30" fill="none"/>
<path d="M855.5 388L853.5 659" stroke="#000" stroke-width="1.30" fill="none"/>
<path d="M865.5 392L863.5 659" stroke="#000" stroke-width="0.78" fill="none"/>
<path d="M1525.5 388L1524 659" stroke="#000" stroke-width="1.56" fill="none"/>
<path d="M853.5 658.8L1524 658.8" stroke="#000" stroke-width="1.30" fill="none"/>
<rect x="880" y="134.5" width="106.5" height="253.5" fill="#e0e0e0" stroke="#000" stroke-width="1.82"/>
<rect x="891" y="138" width="12" height="4" fill="#e0e0e0" stroke="#000" stroke-width="1.04"/><rect x="965" y="138" width="12" height="4" fill="#e0e0e0" stroke="#000" stroke-width="1.04"/><path d="M880 142.5L986 142.5" stroke="#000" stroke-width="1.04" fill="none"/><path d="M971.5 198L971.5 388" stroke="#000" stroke-width="1.04" fill="none"/><path d="M979.5 198L979.5 388" stroke="#000" stroke-width="1.04" fill="none"/><path d="M881 384L971 384" stroke="#000" stroke-width="1.04" fill="none"/><rect x="965" y="198" width="9" height="4" fill="#e0e0e0" stroke="#000" stroke-width="1.04"/><rect x="883.5" y="144" width="101" height="54.5" fill="#e0e0e0" stroke="#000" stroke-width="1.56"/><rect x="885" y="146" width="98" height="51" fill="#e0e0e0" stroke="#000" stroke-width="0.78"/><rect x="895.5" y="154" width="60" height="22.5" fill="#e0e0e0" stroke="#000" stroke-width="1.30"/><rect x="959.5" y="150.5" width="4.5" height="5" fill="#e0e0e0" stroke="#000" stroke-width="1.04"/><rect x="967.5" y="150.5" width="4.5" height="5" fill="#e0e0e0" stroke="#000" stroke-width="1.04"/><rect x="975.5" y="150.5" width="4.5" height="5" fill="#e0e0e0" stroke="#000" stroke-width="1.04"/><rect x="959.5" y="158.8" width="4.5" height="5" fill="#e0e0e0" stroke="#000" stroke-width="1.04"/><rect x="967.5" y="158.8" width="4.5" height="5" fill="#e0e0e0" stroke="#000" stroke-width="1.04"/><rect x="975.5" y="158.8" width="4.5" height="5" fill="#e0e0e0" stroke="#000" stroke-width="1.04"/><rect x="959.5" y="167.1" width="4.5" height="5" fill="#e0e0e0" stroke="#000" stroke-width="1.04"/><rect x="967.5" y="167.1" width="4.5" height="5" fill="#e0e0e0" stroke="#000" stroke-width="1.04"/><rect x="975.5" y="167.1" width="4.5" height="5" fill="#e0e0e0" stroke="#000" stroke-width="1.04"/><rect x="959.5" y="175.4" width="4.5" height="5" fill="#e0e0e0" stroke="#000" stroke-width="1.04"/><rect x="967.5" y="175.4" width="4.5" height="5" fill="#e0e0e0" stroke="#000" stroke-width="1.04"/><rect x="975.5" y="175.4" width="4.5" height="5" fill="#00d040" stroke="#000" stroke-width="1.04"/><rect x="887.5" y="184.5" width="10" height="9" fill="#f08080" stroke="#000" stroke-width="1.04"/><circle cx="892.5" cy="189" r="2.8" fill="#f08080" stroke="#000" stroke-width="0.78"/><rect x="899.2" y="184.5" width="10" height="9" fill="#e0e0e0" stroke="#000" stroke-width="1.04"/><circle cx="904.2" cy="189" r="2.8" fill="#f4f4f4" stroke="#000" stroke-width="0.78"/><rect x="910.9" y="184.5" width="10" height="9" fill="#e0e0e0" stroke="#000" stroke-width="1.04"/><circle cx="915.9" cy="189" r="2.8" fill="#701010" stroke="#000" stroke-width="0.65"/><rect x="922.6" y="184.5" width="10" height="9" fill="#e0e0e0" stroke="#000" stroke-width="1.04"/><circle cx="927.6" cy="189" r="2.8" fill="#701010" stroke="#000" stroke-width="0.65"/><rect x="934.3" y="184.5" width="10" height="9" fill="#e0e0e0" stroke="#000" stroke-width="1.04"/><circle cx="939.3" cy="189" r="2.8" fill="#f4f4f4" stroke="#000" stroke-width="0.78"/><rect x="946" y="184.5" width="10" height="9" fill="#e0e0e0" stroke="#000" stroke-width="1.04"/><rect x="948.5" y="186.5" width="5" height="5" fill="#e0e0e0" stroke="#000" stroke-width="0.78"/><rect x="957.7" y="184.5" width="10" height="9" fill="#e0e0e0" stroke="#000" stroke-width="1.04"/><circle cx="962.7" cy="189" r="2.8" fill="#f4f4f4" stroke="#000" stroke-width="0.78"/><rect x="969.4" y="184.5" width="10" height="9" fill="#00d848" stroke="#000" stroke-width="1.04"/><circle cx="974.4" cy="189" r="2.8" fill="#00d848" stroke="#000" stroke-width="0.78"/><rect x="890.5" y="209" width="72" height="72" fill="#b9b9b9" stroke="#000" stroke-width="1.30" rx="2.500"/><rect x="894.3" y="212.3" width="2.4" height="2.4" fill="#1a3a1a"/><rect x="956.8" y="212.3" width="2.4" height="2.4" fill="#1a3a1a"/><rect x="893.8" y="275.3" width="2.4" height="2.4" fill="#1a3a1a"/><rect x="956.3" y="275.3" width="2.4" height="2.4" fill="#1a3a1a"/><circle cx="927" cy="244" r="33.5" fill="#1b4f24" stroke="#000" stroke-width="1.56"/><circle cx="927" cy="244" r="30.5" fill="none" stroke="#101c44" stroke-width="5.20"/><path d="M910 219.500A30 30 0 0 1 918 215.500 M926 212.500A31.500 31.500 0 0 1 945 218.500 M952 226A31 31 0 0 1 957.500 237 M957.500 252A31 31 0 0 1 951 264.500 M903 264.500A31 31 0 0 0 910 270.500" fill="none" stroke="#fff" stroke-width="1.69"/><path d="M947 229l4 8M949.500 227.500l4 8M949 256l-4 9M951.500 257.500l-4 9M906 268l6-7" fill="none" stroke="#2e8a3a" stroke-width="1.95"/><path d="M914 216 Q920 211 927 211.500 L928 223 L918 229z" fill="#1e5a28"/><path d="M944 241 L958 238 Q961 246 958.500 254 L943 253 z" fill="#174020"/><path d="M895 252 L908 243 L911 256 L903 264 L897 259z" fill="#3a9a44" stroke="#000" stroke-width="0.65"/><path d="M899 240 L918 229 L921 236 L904 248z" fill="#2f8c3a"/><path d="M913 258 L921 262 L915 276 Q908 273 904 268z" fill="#2a7c34"/><path d="M940 256 L950 262 Q946 270 939 274 L934 262z" fill="#2a7c34"/><path d="M902 262l-6 6 3 3 7-6z" fill="#b9b9b9"/><circle cx="927" cy="246.5" r="18" fill="#2e8a3a" stroke="#154a1e" stroke-width="1.04"/><path d="M895.500 245.500h7M899 242v7" fill="none" stroke="#3aa044" stroke-width="2.60"/><path d="M883.500 229 L889 220.500 L896 215 L904 219.500 L909 227 L903.500 235.500 L896 241 L888 236z" fill="#c8b414" stroke="#000" stroke-width="1.17"/><circle cx="896.3" cy="227.7" r="7.7" fill="#2e8a3a" stroke="#000" stroke-width="1.56"/><path d="M890.300 223 A7.700 7.700 0 0 1 902.300 232.400z" fill="#f09010" stroke="#000" stroke-width="0.65"/><path d="M890 230l10-7M891.500 232.500l10-7" fill="none" stroke="#164a1e" stroke-width="1.17"/><circle cx="933.5" cy="228.1" r="12" fill="#c81414" stroke="#000" stroke-width="1.56"/><circle cx="933.5" cy="228.1" r="9.3" fill="#d01a1a" stroke="#6a0808" stroke-width="1.30"/><path d="M933.500 220.500l2.500 4 4.500 1-2.500 3.500 .5 4.500-5-1.500-5 1.500 .5-4.500-2.500-3.500 4.500-1z" fill="#b81010" stroke="#6a0808" stroke-width="1.04"/><path d="M920.500 234l2.500 2.500M944 221l1.500 1.500" fill="none" stroke="#fff" stroke-width="2.08"/><path d="M931.500 241.800h4" fill="none" stroke="#fff" stroke-width="2.08"/><path d="M927 215.500h5" fill="none" stroke="#fff" stroke-width="1.56"/><circle cx="968.8" cy="228.3" r="8.8" fill="#b00000" stroke="#000" stroke-width="1.69"/><rect x="918" y="258" width="28.5" height="27" fill="#eeeeee" stroke="#000" stroke-width="1.56"/><rect x="920.5" y="261" width="23.5" height="15.5" fill="#7a7a7a" stroke="#000" stroke-width="1.04"/><rect x="920.5" y="278.5" width="5" height="4.5" fill="#f8f8f8" stroke="#000" stroke-width="1.04"/><rect x="926.5" y="278.5" width="5" height="4.5" fill="#f8f8f8" stroke="#000" stroke-width="1.04"/><rect x="932.5" y="278.5" width="5" height="4.5" fill="#f8f8f8" stroke="#000" stroke-width="1.04"/><rect x="938.5" y="278.5" width="5" height="4.5" fill="#f8f8f8" stroke="#000" stroke-width="1.04"/><rect x="926" y="254.5" width="7" height="3.5" fill="#b8b8b8" stroke="#000" stroke-width="0.78"/><rect x="926" y="285" width="11" height="3.5" fill="#aaa" stroke="#000" stroke-width="0.78"/><rect x="928" y="288.5" width="7" height="2.5" fill="#999"/><circle cx="895.5" cy="282" r="0.8" fill="#222"/>
<rect x="1002" y="134.5" width="506.5" height="253.5" fill="#e0e0e0" stroke="#000" stroke-width="1.82"/>
<path d="M1003 142.5L1400 142.5" stroke="#000" stroke-width="1.04" fill="none"/><rect x="1401.5" y="138.5" width="100" height="249.5" fill="#e0e0e0" stroke="#000" stroke-width="1.30"/><rect x="1408.5" y="144" width="86" height="143.5" fill="#e0e0e0" stroke="#000" stroke-width="1.30"/><path d="M1498 139L1498 388" stroke="#000" stroke-width="1.04" fill="none"/><path d="M1504 139L1504 388" stroke="#000" stroke-width="1.04" fill="none"/><path d="M1408.500 287.500 V388 M1494.500 287.500 V300 M1433 281 H1490 V296 M1433 290 H1488" fill="none" stroke="#000" stroke-width="1.04"/><path d="M1044 189 H1068 M1044 189 V221 M1047 189 V221 M1058 189 V221 M1062 189 V221" fill="none" stroke="#000" stroke-width="1.30"/><path d="M1089 146 H1104 V221 M1092 146 V221 M1096 146 V221" fill="none" stroke="#000" stroke-width="1.56"/><path d="M1139 185 H1178 V221 M1139 185 V221 M1143 185 V221 M1165 185 V221 M1169 185 V221 M1174 200 V221" fill="none" stroke="#000" stroke-width="1.30"/><path d="M1134 201 h4 v20 h-4z M1171 201 h4 v20 h-4z" fill="#f0f0f0" stroke="#000" stroke-width="0.91"/><path d="M1197 196 H1223 M1197 196 V222 M1200 196 V222 M1206 196 V222 M1214 196 V222 M1218 196 V222" fill="none" stroke="#000" stroke-width="1.30"/><rect x="1224" y="196" width="41" height="18" fill="#e0e0e0" stroke="#000" stroke-width="1.30"/><rect x="1259" y="194" width="3.5" height="27" fill="#f0f0f0" stroke="#000" stroke-width="0.91"/><path d="M1221.500 181 q1.500 -2 3 0 V197 h-3z" fill="#d0d0d0" stroke="#000" stroke-width="1.30"/><rect x="1348.5" y="153.5" width="23" height="67.5" fill="#e6e6e6" stroke="#000" stroke-width="1.82"/><rect x="1352" y="154.5" width="4" height="66.5" fill="#111"/><rect x="1366" y="154.5" width="3.5" height="66.5" fill="#111"/><circle cx="1362" cy="158.5" r="2.6" fill="#e0e0e0" stroke="#000" stroke-width="1.04"/><circle cx="1362" cy="189.5" r="2.8" fill="#e0e0e0" stroke="#000" stroke-width="1.04"/><circle cx="1362" cy="198" r="2.8" fill="#e0e0e0" stroke="#000" stroke-width="1.04"/><path d="M1350 194.5L1371 194.5" stroke="#000" stroke-width="1.04" fill="none"/><rect x="1360" y="207" width="4" height="15" fill="#f2f2f2" stroke="#000" stroke-width="0.65"/><rect x="1317.5" y="194" width="4" height="64" fill="url(#cylg)"/><rect x="1400" y="207" width="4.5" height="50" fill="url(#cylg)"/><rect x="1050" y="138" width="14" height="6" fill="url(#cylg)" stroke="#000" stroke-width="1.04"/><path d="M1054.5 138L1054.5 144" stroke="#000" stroke-width="0.91" fill="none"/><path d="M1059.5 138L1059.5 144" stroke="#000" stroke-width="0.91" fill="none"/><rect x="1050.5" y="144" width="13" height="17" fill="url(#cylg)"/><path d="M1050 157L1064 157" stroke="#000" stroke-width="1.30" fill="none"/><path d="M1050 161L1064 161" stroke="#000" stroke-width="1.56" fill="none"/><rect x="1054" y="161" width="6" height="61" fill="url(#cylg)"/><path d="M1053 188 h8 M1057 188 V205" fill="none" stroke="#000" stroke-width="1.82"/><rect x="1071.28" y="127.8" width="13.94" height="17" fill="#e0e0e0" stroke="#000" stroke-width="1.30"/><circle cx="1078.25" cy="133.8" r="2.6" fill="#e8e8e8" stroke="#000" stroke-width="1.30"/><path d="M1076.05 134.8a2.300 2.300 0 0 0 4.400 0z" fill="#222"/><rect x="1068" y="143.8" width="20.5" height="77.2" fill="url(#cylg)"/><path d="M1068 144.3L1088.5 144.3" stroke="#000" stroke-width="1.30" fill="none"/><path d="M1068 153.8L1088.5 153.8" stroke="#000" stroke-width="2.21" fill="none"/><path d="M1068 211L1088.5 211" stroke="#000" stroke-width="2.21" fill="none"/><path d="M1088 143.8L1088 221" stroke="#222" stroke-width="1.30" fill="none"/><path d="M1068.5 143.8L1068.5 221" stroke="#999" stroke-width="1.30" fill="none"/><rect x="1147.96" y="133" width="12.58" height="15" fill="#e0e0e0" stroke="#000" stroke-width="1.30"/><circle cx="1154.25" cy="139" r="2.6" fill="#e8e8e8" stroke="#000" stroke-width="1.30"/><path d="M1152.05 140a2.300 2.300 0 0 0 4.400 0z" fill="#222"/><rect x="1145" y="147" width="18.5" height="74" fill="url(#cylg)"/><path d="M1145 147.5L1163.5 147.5" stroke="#000" stroke-width="1.30" fill="none"/><path d="M1145 157L1163.5 157" stroke="#000" stroke-width="2.21" fill="none"/><path d="M1145 211L1163.5 211" stroke="#000" stroke-width="2.21" fill="none"/><path d="M1163 147L1163 221" stroke="#222" stroke-width="1.30" fill="none"/><path d="M1145.5 147L1145.5 221" stroke="#999" stroke-width="1.30" fill="none"/><rect x="1203" y="146" width="16" height="6" fill="url(#cylg)" stroke="#000" stroke-width="1.04"/><path d="M1208.5 146L1208.5 152" stroke="#000" stroke-width="0.91" fill="none"/><path d="M1213.5 146L1213.5 152" stroke="#000" stroke-width="0.91" fill="none"/><rect x="1203.5" y="152" width="15" height="16" fill="url(#cylg)"/><path d="M1203 164L1219 164" stroke="#000" stroke-width="1.30" fill="none"/><path d="M1203 168L1219 168" stroke="#000" stroke-width="1.56" fill="none"/><rect x="1208" y="168" width="6" height="28" fill="url(#cylg)"/><rect x="1264" y="172" width="16" height="6" fill="url(#cylg)" stroke="#000" stroke-width="1.04"/><path d="M1269.5 172L1269.5 178" stroke="#000" stroke-width="0.91" fill="none"/><path d="M1274.5 172L1274.5 178" stroke="#000" stroke-width="0.91" fill="none"/><rect x="1264.5" y="178" width="15" height="16" fill="url(#cylg)"/><path d="M1264 190L1280 190" stroke="#000" stroke-width="1.30" fill="none"/><path d="M1264 194L1280 194" stroke="#000" stroke-width="1.56" fill="none"/><rect x="1269" y="194" width="6" height="28" fill="url(#cylg)"/><rect x="1284.46" y="132.3" width="12.58" height="13" fill="#e0e0e0" stroke="#000" stroke-width="1.30"/><circle cx="1290.75" cy="138.3" r="2.6" fill="#e8e8e8" stroke="#000" stroke-width="1.30"/><path d="M1288.55 139.3a2.300 2.300 0 0 0 4.400 0z" fill="#222"/><rect x="1281.5" y="144.3" width="18.5" height="76.7" fill="url(#cylg)"/><path d="M1281.5 144.8L1300 144.8" stroke="#000" stroke-width="1.30" fill="none"/><path d="M1281.5 154.3L1300 154.3" stroke="#000" stroke-width="2.21" fill="none"/><path d="M1281.5 211L1300 211" stroke="#000" stroke-width="2.21" fill="none"/><path d="M1299.5 144.3L1299.5 221" stroke="#222" stroke-width="1.30" fill="none"/><path d="M1282 144.3L1282 221" stroke="#999" stroke-width="1.30" fill="none"/><rect x="1375.86" y="128.5" width="14.28" height="17" fill="#e0e0e0" stroke="#000" stroke-width="1.30"/><circle cx="1383" cy="134.5" r="2.6" fill="#e8e8e8" stroke="#000" stroke-width="1.30"/><path d="M1380.8 135.5a2.300 2.300 0 0 0 4.400 0z" fill="#222"/><rect x="1372.5" y="144.5" width="21" height="76.5" fill="url(#cylg)"/><path d="M1372.5 145L1393.5 145" stroke="#000" stroke-width="1.30" fill="none"/><path d="M1372.5 154.5L1393.5 154.5" stroke="#000" stroke-width="2.21" fill="none"/><path d="M1372.5 211L1393.5 211" stroke="#000" stroke-width="2.21" fill="none"/><path d="M1393 144.5L1393 221" stroke="#222" stroke-width="1.30" fill="none"/><path d="M1373 144.5L1373 221" stroke="#999" stroke-width="1.30" fill="none"/><rect x="1076" y="216" width="6" height="5" fill="#e0e0e0" stroke="#000" stroke-width="0.91"/><rect x="1152" y="216" width="6" height="5" fill="#e0e0e0" stroke="#000" stroke-width="0.91"/><rect x="1288" y="216" width="6" height="5" fill="#e0e0e0" stroke="#000" stroke-width="0.91"/><rect x="1380" y="216" width="6" height="5" fill="#e0e0e0" stroke="#000" stroke-width="0.91"/><rect x="1030.5" y="220.8" width="403" height="14.7" fill="#a0a0c8" stroke="#000" stroke-width="1.04"/><circle cx="1036" cy="225" r="0.6" fill="#222"/><circle cx="1039" cy="225" r="0.6" fill="#222"/><circle cx="1429" cy="224.5" r="0.6" fill="#222"/><rect x="1054" y="237" width="4.5" height="27" fill="url(#cylg)"/><rect x="1072" y="237" width="8" height="27" fill="url(#cylg)"/><rect x="1095" y="237" width="4.5" height="27" fill="url(#cylg)"/><rect x="1133" y="237" width="4.5" height="27" fill="url(#cylg)"/><rect x="1150" y="237" width="6" height="27" fill="url(#cylg)"/><rect x="1169" y="237" width="4.5" height="27" fill="url(#cylg)"/><rect x="1259" y="237" width="4.5" height="27" fill="url(#cylg)"/><rect x="1286" y="237" width="6" height="27" fill="url(#cylg)"/><rect x="1321" y="237" width="4" height="27" fill="url(#cylg)"/><rect x="1362" y="237" width="4" height="27" fill="url(#cylg)"/><rect x="1381" y="237" width="7" height="27" fill="url(#cylg)"/><rect x="1402" y="237" width="4.5" height="27" fill="url(#cylg)"/><path d="M1043 237 V244 H1070 V237 M1046 251 H1067 V264 M1046 251 V264 M1050 254 H1063 V264 M1050 254 V264" fill="none" stroke="#000" stroke-width="1.04"/><path d="M1081 246 H1103 M1083 249 H1100 M1103 246 L1107 264 M1105 246 L1109 264" fill="none" stroke="#000" stroke-width="1.30"/><path d="M1139 237 V244 H1176 V237 M1143 248 H1172 V264 M1143 248 V264" fill="none" stroke="#000" stroke-width="1.04"/><circle cx="1147" cy="252.5" r="2.5" fill="#f4f4f4" stroke="#000" stroke-width="1.04"/><circle cx="1166" cy="252.5" r="2.5" fill="#f4f4f4" stroke="#000" stroke-width="1.04"/><circle cx="1091" cy="258" r="0.9" fill="none" stroke="#000" stroke-width="0.78"/><path d="M1203 237 V254 M1206 237 V254 M1217 237 V254 M1221 237 V254 M1203 254 q3 4 5 0 M1216 254 q3 4 5 0" fill="none" stroke="#000" stroke-width="2.08"/><path d="M1208 258 l4 4 l3 -4" fill="none" stroke="#000" stroke-width="0.91"/><path d="M1267 237 V264 M1271 237 V264 M1276 237 V264 M1307 237 V264 M1309.500 237 V264" fill="none" stroke="#000" stroke-width="1.56"/><path d="M1349 237 V243 H1373 V237 M1349 243 V249 H1373 V243" fill="none" stroke="#000" stroke-width="1.17"/><rect x="1352" y="237" width="4" height="6" fill="#111"/><rect x="1366" y="237" width="3.5" height="6" fill="#111"/><path d="M1350 253 H1374 V264 M1354 253 V264" fill="none" stroke="#000" stroke-width="1.17"/><rect x="1350" y="255" width="3.5" height="9" fill="#111"/><rect x="1371" y="255" width="3" height="9" fill="#444"/><rect x="1053" y="260" width="8" height="4.5" fill="#f0e010"/><rect x="1094" y="260" width="8" height="4.5" fill="#f0e010"/><rect x="1131" y="260.5" width="9" height="4" fill="#f0e010"/><rect x="1167" y="260.5" width="9" height="4" fill="#f0e010"/><rect x="1256" y="254" width="8.5" height="9" fill="#f0e010"/><rect x="1316" y="254.5" width="8" height="8.5" fill="#f0e010"/><rect x="1358" y="262" width="8" height="3" fill="#f0e010"/><rect x="1399" y="262" width="8" height="3" fill="#f0e010"/><rect x="1031" y="237" width="11" height="40" fill="#e0e0e0" stroke="#000" stroke-width="1.17"/><rect x="1035" y="241" width="4" height="23" fill="#f4f4f4" stroke="#000" stroke-width="1.04" rx="2"/><circle cx="1037" cy="270" r="1.8" fill="#f4f4f4" stroke="#000" stroke-width="1.04"/><rect x="1421.5" y="235.5" width="10.5" height="41.5" fill="#e0e0e0" stroke="#000" stroke-width="1.17"/><rect x="1424.5" y="240" width="4" height="23" fill="#f4f4f4" stroke="#000" stroke-width="1.04" rx="2"/><circle cx="1426.5" cy="270.5" r="1.8" fill="#f4f4f4" stroke="#000" stroke-width="1.04"/><path d="M1042 264.500 H1421 V282 H1040 Q1031 282 1031 275 V277" fill="#e0e0e0" stroke="#000" stroke-width="1.30"/><path d="M1020 275.500 H1031 M1020 275.500 V294" fill="none" stroke="#000" stroke-width="1.04"/><rect x="1179.5" y="220" width="18" height="62" fill="#e0e0e0" stroke="#000" stroke-width="1.30"/><rect x="1182.5" y="224" width="4" height="17" fill="#f4f4f4" stroke="#000" stroke-width="1.04" rx="2"/><rect x="1192" y="224" width="4" height="17" fill="#f4f4f4" stroke="#000" stroke-width="1.04" rx="2"/><circle cx="1183.5" cy="274.5" r="1.7" fill="#333" stroke="#000" stroke-width="0.78"/><circle cx="1193.5" cy="274.5" r="1.7" fill="#333" stroke="#000" stroke-width="0.78"/><rect x="1199.5" y="269.5" width="26" height="13" fill="#e0e0e0" stroke="#000" stroke-width="1.30"/><path d="M1203 279l1.500-2.500 1.500 2.500z" fill="#333"/><circle cx="1221" cy="279" r="1.6" fill="#222"/><rect x="1202" y="282.5" width="17" height="3" fill="#e0e0e0" stroke="#000" stroke-width="0.91"/><rect x="1207" y="285.5" width="6" height="9" fill="url(#cylg)"/><path d="M1044 282 V294 M1049 282 V294 M1071 282 V291 H1084 V282 M1105 282 V294 M1117 282 V294 M1132 285 H1175 V294 M1132 285 V294 M1148 288 H1163 V294 M1175 282 V294 M1178 282 V294 M1233 285 H1249 M1249 282 V294 M1272 282 V294 M1293 282 V294 M1315 282 V294 M1233 282 V294" fill="none" stroke="#000" stroke-width="1.04"/><circle cx="1077" cy="286" r="1.5" fill="#f4f4f4" stroke="#000" stroke-width="0.91"/><circle cx="1147" cy="291" r="0.8" fill="#222"/><circle cx="1159" cy="291" r="0.8" fill="#222"/><circle cx="1251" cy="291" r="1.1" fill="none" stroke="#000" stroke-width="0.78"/><circle cx="1260" cy="291" r="1.4" fill="#802020" stroke="#000" stroke-width="0.65"/><circle cx="1270" cy="291" r="1.1" fill="none" stroke="#000" stroke-width="0.78"/><rect x="1257" y="284" width="4" height="4" fill="#111"/><path d="M1310 284 H1400 M1375 282 H1388 V291 H1375z M1345 284 V294 M1352 284 V294 M1405 282 V300 M1411 282 V300 M1420 282 V300" fill="none" stroke="#000" stroke-width="1.04"/><circle cx="1381.5" cy="286.5" r="1.5" fill="#f4f4f4" stroke="#000" stroke-width="0.91"/><rect x="1012" y="293.6" width="5" height="2.8" fill="#00e0e0"/><rect x="1020" y="294.2" width="4" height="2.2" fill="#00e0e0"/><rect x="1011" y="296.3" width="13" height="4.3" fill="#00e0e0"/><rect x="1024.6" y="295.1" width="1.5" height="5.5" fill="#000"/><rect x="1027.9" y="293.6" width="5" height="2.8" fill="#00e0e0"/><rect x="1035.9" y="294.2" width="4" height="2.2" fill="#00e0e0"/><rect x="1026.9" y="296.3" width="13" height="4.3" fill="#00e0e0"/><rect x="1040.5" y="295.1" width="1.5" height="5.5" fill="#000"/><rect x="1043.8" y="293.6" width="5" height="2.8" fill="#00e0e0"/><rect x="1051.8" y="294.2" width="4" height="2.2" fill="#00e0e0"/><rect x="1042.8" y="296.3" width="13" height="4.3" fill="#00e0e0"/><rect x="1056.4" y="295.1" width="1.5" height="5.5" fill="#000"/><rect x="1059.7" y="293.6" width="5" height="2.8" fill="#00e0e0"/><rect x="1067.7" y="294.2" width="4" height="2.2" fill="#00e0e0"/><rect x="1058.7" y="296.3" width="13" height="4.3" fill="#00e0e0"/><rect x="1072.3" y="295.1" width="1.5" height="5.5" fill="#000"/><rect x="1075.6" y="293.6" width="5" height="2.8" fill="#00e0e0"/><rect x="1083.6" y="294.2" width="4" height="2.2" fill="#00e0e0"/><rect x="1074.6" y="296.3" width="13" height="4.3" fill="#00e0e0"/><rect x="1088.2" y="295.1" width="1.5" height="5.5" fill="#000"/><rect x="1091.5" y="293.6" width="5" height="2.8" fill="#00e0e0"/><rect x="1099.5" y="294.2" width="4" height="2.2" fill="#00e0e0"/><rect x="1090.5" y="296.3" width="13" height="4.3" fill="#00e0e0"/><rect x="1104.1" y="295.1" width="1.5" height="5.5" fill="#000"/><rect x="1107.4" y="293.6" width="5" height="2.8" fill="#00e0e0"/><rect x="1115.4" y="294.2" width="4" height="2.2" fill="#00e0e0"/><rect x="1106.4" y="296.3" width="13" height="4.3" fill="#00e0e0"/><rect x="1120" y="295.1" width="1.5" height="5.5" fill="#000"/><rect x="1123.3" y="293.6" width="5" height="2.8" fill="#00e0e0"/><rect x="1131.3" y="294.2" width="4" height="2.2" fill="#00e0e0"/><rect x="1122.3" y="296.3" width="13" height="4.3" fill="#00e0e0"/><rect x="1135.9" y="295.1" width="1.5" height="5.5" fill="#000"/><rect x="1139.2" y="293.6" width="5" height="2.8" fill="#00e0e0"/><rect x="1147.2" y="294.2" width="4" height="2.2" fill="#00e0e0"/><rect x="1138.2" y="296.3" width="13" height="4.3" fill="#00e0e0"/><rect x="1151.8" y="295.1" width="1.5" height="5.5" fill="#000"/><rect x="1155.1" y="293.6" width="5" height="2.8" fill="#00e0e0"/><rect x="1163.1" y="294.2" width="4" height="2.2" fill="#00e0e0"/><rect x="1154.1" y="296.3" width="13" height="4.3" fill="#00e0e0"/><rect x="1167.7" y="295.1" width="1.5" height="5.5" fill="#000"/><rect x="1171" y="293.6" width="5" height="2.8" fill="#00e0e0"/><rect x="1179" y="294.2" width="4" height="2.2" fill="#00e0e0"/><rect x="1170" y="296.3" width="13" height="4.3" fill="#00e0e0"/><rect x="1183.6" y="295.1" width="1.5" height="5.5" fill="#000"/><rect x="1186.9" y="293.6" width="5" height="2.8" fill="#00e0e0"/><rect x="1194.9" y="294.2" width="4" height="2.2" fill="#00e0e0"/><rect x="1185.9" y="296.3" width="13" height="4.3" fill="#00e0e0"/><rect x="1199.5" y="295.1" width="1.5" height="5.5" fill="#000"/><rect x="1202.8" y="293.6" width="5" height="2.8" fill="#00e0e0"/><rect x="1210.8" y="294.2" width="4" height="2.2" fill="#00e0e0"/><rect x="1201.8" y="296.3" width="13" height="4.3" fill="#00e0e0"/><rect x="1215.4" y="295.1" width="1.5" height="5.5" fill="#000"/><rect x="1218.7" y="293.6" width="5" height="2.8" fill="#00e0e0"/><rect x="1226.7" y="294.2" width="4" height="2.2" fill="#00e0e0"/><rect x="1217.7" y="296.3" width="13" height="4.3" fill="#00e0e0"/><rect x="1231.3" y="295.1" width="1.5" height="5.5" fill="#000"/><rect x="1234.6" y="293.6" width="5" height="2.8" fill="#00e0e0"/><rect x="1242.6" y="294.2" width="4" height="2.2" fill="#00e0e0"/><rect x="1233.6" y="296.3" width="13" height="4.3" fill="#00e0e0"/><rect x="1247.2" y="295.1" width="1.5" height="5.5" fill="#000"/><rect x="1250.5" y="293.6" width="5" height="2.8" fill="#00e0e0"/><rect x="1258.5" y="294.2" width="4" height="2.2" fill="#00e0e0"/><rect x="1249.5" y="296.3" width="13" height="4.3" fill="#00e0e0"/><rect x="1263.1" y="295.1" width="1.5" height="5.5" fill="#000"/><rect x="1266.4" y="293.6" width="5" height="2.8" fill="#00e0e0"/><rect x="1274.4" y="294.2" width="4" height="2.2" fill="#00e0e0"/><rect x="1265.4" y="296.3" width="13" height="4.3" fill="#00e0e0"/><rect x="1279" y="295.1" width="1.5" height="5.5" fill="#000"/><rect x="1282.3" y="293.6" width="5" height="2.8" fill="#00e0e0"/><rect x="1290.3" y="294.2" width="4" height="2.2" fill="#00e0e0"/><rect x="1281.3" y="296.3" width="13" height="4.3" fill="#00e0e0"/><rect x="1294.9" y="295.1" width="1.5" height="5.5" fill="#000"/><rect x="1298.2" y="293.6" width="5" height="2.8" fill="#00e0e0"/><rect x="1306.2" y="294.2" width="4" height="2.2" fill="#00e0e0"/><rect x="1297.2" y="296.3" width="13" height="4.3" fill="#00e0e0"/><rect x="1310.8" y="295.1" width="1.5" height="5.5" fill="#000"/><rect x="1314.1" y="293.6" width="5" height="2.8" fill="#00e0e0"/><rect x="1322.1" y="294.2" width="4" height="2.2" fill="#00e0e0"/><rect x="1313.1" y="296.3" width="13" height="4.3" fill="#00e0e0"/><rect x="1326.7" y="295.1" width="1.5" height="5.5" fill="#000"/><rect x="1330" y="293.6" width="5" height="2.8" fill="#00e0e0"/><rect x="1338" y="294.2" width="4" height="2.2" fill="#00e0e0"/><rect x="1329" y="296.3" width="13" height="4.3" fill="#00e0e0"/><rect x="1342.6" y="295.1" width="1.5" height="5.5" fill="#000"/><rect x="1345.9" y="293.6" width="5" height="2.8" fill="#00e0e0"/><rect x="1353.9" y="294.2" width="4" height="2.2" fill="#00e0e0"/><rect x="1344.9" y="296.3" width="13" height="4.3" fill="#00e0e0"/><rect x="1358.5" y="295.1" width="1.5" height="5.5" fill="#000"/><rect x="1361.8" y="293.6" width="5" height="2.8" fill="#00e0e0"/><rect x="1369.8" y="294.2" width="4" height="2.2" fill="#00e0e0"/><rect x="1360.8" y="296.3" width="13" height="4.3" fill="#00e0e0"/><rect x="1374.4" y="295.1" width="1.5" height="5.5" fill="#000"/><rect x="1377.7" y="293.6" width="5" height="2.8" fill="#00e0e0"/><rect x="1385.7" y="294.2" width="4" height="2.2" fill="#00e0e0"/><rect x="1376.7" y="296.3" width="13" height="4.3" fill="#00e0e0"/><rect x="1390.3" y="295.1" width="1.5" height="5.5" fill="#000"/><rect x="1393.6" y="293.6" width="5" height="2.8" fill="#00e0e0"/><rect x="1401.6" y="294.2" width="4" height="2.2" fill="#00e0e0"/><rect x="1392.6" y="296.3" width="13" height="4.3" fill="#00e0e0"/><rect x="1406.2" y="295.1" width="1.5" height="5.5" fill="#000"/><rect x="1409.5" y="293.6" width="5" height="2.8" fill="#00e0e0"/><rect x="1417.5" y="294.2" width="4" height="2.2" fill="#00e0e0"/><rect x="1408.5" y="296.3" width="13" height="4.3" fill="#00e0e0"/><rect x="1422.1" y="295.1" width="1.5" height="5.5" fill="#000"/><rect x="1425.4" y="293.6" width="5" height="2.8" fill="#00e0e0"/><rect x="1433.4" y="294.2" width="4" height="2.2" fill="#00e0e0"/><rect x="1424.4" y="296.3" width="13" height="4.3" fill="#00e0e0"/><rect x="1438" y="295.1" width="1.5" height="5.5" fill="#000"/><rect x="1441.3" y="293.6" width="5" height="2.8" fill="#00e0e0"/><rect x="1449.3" y="294.2" width="4" height="2.2" fill="#00e0e0"/><rect x="1440.3" y="296.3" width="13" height="4.3" fill="#00e0e0"/><rect x="1453.9" y="295.1" width="1.5" height="5.5" fill="#000"/><rect x="1457.2" y="293.6" width="5" height="2.8" fill="#00e0e0"/><rect x="1465.2" y="294.2" width="4" height="2.2" fill="#00e0e0"/><rect x="1456.2" y="296.3" width="13" height="4.3" fill="#00e0e0"/><rect x="1469.8" y="295.1" width="1.5" height="5.5" fill="#000"/><path d="M1008 309 H1452 A26.500 26.500 0 0 1 1452 362 H1008 A26.500 26.500 0 0 1 1008 309z" fill="#e0e0e0" stroke="#000" stroke-width="1.30"/><g transform="translate(998.2 360.5) rotate(201)"><rect x="-6.200" y="-4.800" width="12.400" height="5.300" fill="#00e0e0"/><rect x="-5.500" y="-8.200" width="5" height="3.400" fill="#007478"/><rect x="1.500" y="-7.800" width="3.800" height="3" fill="#007478"/></g><g transform="translate(986.8 351.9) rotate(232)"><rect x="-6.200" y="-4.800" width="12.400" height="5.300" fill="#00e0e0"/><rect x="-5.500" y="-8.200" width="5" height="3.400" fill="#007478"/><rect x="1.500" y="-7.800" width="3.800" height="3" fill="#007478"/></g><g transform="translate(981.4 338.8) rotate(263)"><rect x="-6.200" y="-4.800" width="12.400" height="5.300" fill="#00e0e0"/><rect x="-5.500" y="-8.200" width="5" height="3.400" fill="#00e0e0"/><rect x="1.500" y="-7.800" width="3.800" height="3" fill="#00e0e0"/></g><g transform="translate(983.5 324.7) rotate(294)"><rect x="-6.200" y="-4.800" width="12.400" height="5.300" fill="#00e0e0"/><rect x="-5.500" y="-8.200" width="5" height="3.400" fill="#00e0e0"/><rect x="1.500" y="-7.800" width="3.800" height="3" fill="#00e0e0"/></g><g transform="translate(992.5 313.7) rotate(325)"><rect x="-6.200" y="-4.800" width="12.400" height="5.300" fill="#00e0e0"/><rect x="-5.500" y="-8.200" width="5" height="3.400" fill="#00e0e0"/><rect x="1.500" y="-7.800" width="3.800" height="3" fill="#00e0e0"/></g><g transform="translate(1001 297.5) rotate(-28)"><rect x="-8" y="-1" width="12" height="4" fill="#00e0e0"/><rect x="-6" y="-4" width="5" height="2.800" fill="#00e0e0"/><rect x="1" y="-3.800" width="4" height="2.600" fill="#00e0e0"/></g><g transform="translate(1473.9 316.2) rotate(44)"><rect x="-6.200" y="-4.800" width="12.400" height="5.300" fill="#00e0e0"/><rect x="-5.500" y="-8.200" width="5" height="3.400" fill="#00e0e0"/><rect x="1.500" y="-7.800" width="3.800" height="3" fill="#00e0e0"/></g><g transform="translate(1480.8 327.7) rotate(73)"><rect x="-6.200" y="-4.800" width="12.400" height="5.300" fill="#00e0e0"/><rect x="-5.500" y="-8.200" width="5" height="3.400" fill="#00e0e0"/><rect x="1.500" y="-7.800" width="3.800" height="3" fill="#00e0e0"/></g><g transform="translate(1481.4 341.1) rotate(102)"><rect x="-6.200" y="-4.800" width="12.400" height="5.300" fill="#00e0e0"/><rect x="-5.500" y="-8.200" width="5" height="3.400" fill="#007478"/><rect x="1.500" y="-7.800" width="3.800" height="3" fill="#007478"/></g><g transform="translate(1475.4 353.1) rotate(131)"><rect x="-6.200" y="-4.800" width="12.400" height="5.300" fill="#00e0e0"/><rect x="-5.500" y="-8.200" width="5" height="3.400" fill="#007478"/><rect x="1.500" y="-7.800" width="3.800" height="3" fill="#007478"/></g><g transform="translate(1464.4 360.8) rotate(160)"><rect x="-6.200" y="-4.800" width="12.400" height="5.300" fill="#00e0e0"/><rect x="-5.500" y="-8.200" width="5" height="3.400" fill="#007478"/><rect x="1.500" y="-7.800" width="3.800" height="3" fill="#007478"/></g><g transform="translate(1470 298.5) rotate(30)"><rect x="-6" y="-1" width="12" height="4" fill="#00e0e0"/><rect x="-5" y="-4" width="5" height="2.800" fill="#007478"/><rect x="2" y="-3.800" width="4" height="2.600" fill="#00e0e0"/></g><rect x="998" y="361.2" width="14.5" height="4.2" fill="#00e0e0"/><rect x="1000" y="365.4" width="9" height="3.8" fill="#007478"/><rect x="1010" y="365.4" width="4" height="2.5" fill="#007478"/><rect x="1012.8" y="361.2" width="1.4" height="4.5" fill="#000"/><rect x="1014.3" y="361.2" width="14.5" height="4.2" fill="#00e0e0"/><rect x="1016.3" y="365.4" width="9" height="3.8" fill="#007478"/><rect x="1026.3" y="365.4" width="4" height="2.5" fill="#007478"/><rect x="1029.1" y="361.2" width="1.4" height="4.5" fill="#000"/><rect x="1030.6" y="361.2" width="14.5" height="4.2" fill="#00e0e0"/><rect x="1032.6" y="365.4" width="9" height="3.8" fill="#007478"/><rect x="1042.6" y="365.4" width="4" height="2.5" fill="#007478"/><rect x="1045.4" y="361.2" width="1.4" height="4.5" fill="#000"/><rect x="1046.9" y="361.2" width="14.5" height="4.2" fill="#00e0e0"/><rect x="1048.9" y="365.4" width="9" height="3.8" fill="#007478"/><rect x="1058.9" y="365.4" width="4" height="2.5" fill="#007478"/><rect x="1061.7" y="361.2" width="1.4" height="4.5" fill="#000"/><rect x="1063.2" y="361.2" width="14.5" height="4.2" fill="#00e0e0"/><rect x="1065.2" y="365.4" width="9" height="3.8" fill="#007478"/><rect x="1075.2" y="365.4" width="4" height="2.5" fill="#007478"/><rect x="1078" y="361.2" width="1.4" height="4.5" fill="#000"/><rect x="1079.5" y="361.2" width="14.5" height="4.2" fill="#00e0e0"/><rect x="1081.5" y="365.4" width="9" height="3.8" fill="#007478"/><rect x="1091.5" y="365.4" width="4" height="2.5" fill="#007478"/><rect x="1094.3" y="361.2" width="1.4" height="4.5" fill="#000"/><rect x="1095.8" y="361.2" width="14.5" height="4.2" fill="#00e0e0"/><rect x="1097.8" y="365.4" width="9" height="3.8" fill="#007478"/><rect x="1107.8" y="365.4" width="4" height="2.5" fill="#007478"/><rect x="1110.6" y="361.2" width="1.4" height="4.5" fill="#000"/><rect x="1112.1" y="361.2" width="14.5" height="4.2" fill="#00e0e0"/><rect x="1114.1" y="365.4" width="9" height="3.8" fill="#007478"/><rect x="1124.1" y="365.4" width="4" height="2.5" fill="#007478"/><rect x="1126.9" y="361.2" width="1.4" height="4.5" fill="#000"/><rect x="1128.4" y="361.2" width="14.5" height="4.2" fill="#00e0e0"/><rect x="1130.4" y="365.4" width="9" height="3.8" fill="#007478"/><rect x="1140.4" y="365.4" width="4" height="2.5" fill="#007478"/><rect x="1143.2" y="361.2" width="1.4" height="4.5" fill="#000"/><rect x="1144.7" y="361.2" width="14.5" height="4.2" fill="#00e0e0"/><rect x="1146.7" y="365.4" width="9" height="3.8" fill="#007478"/><rect x="1156.7" y="365.4" width="4" height="2.5" fill="#007478"/><rect x="1159.5" y="361.2" width="1.4" height="4.5" fill="#000"/><rect x="1161" y="361.2" width="14.5" height="4.2" fill="#00e0e0"/><rect x="1163" y="365.4" width="9" height="3.8" fill="#007478"/><rect x="1173" y="365.4" width="4" height="2.5" fill="#007478"/><rect x="1175.8" y="361.2" width="1.4" height="4.5" fill="#000"/><rect x="1177.3" y="361.2" width="14.5" height="4.2" fill="#00e0e0"/><rect x="1179.3" y="365.4" width="9" height="3.8" fill="#007478"/><rect x="1189.3" y="365.4" width="4" height="2.5" fill="#007478"/><rect x="1192.1" y="361.2" width="1.4" height="4.5" fill="#000"/><rect x="1193.6" y="361.2" width="14.5" height="4.2" fill="#00e0e0"/><rect x="1195.6" y="365.4" width="9" height="3.8" fill="#007478"/><rect x="1205.6" y="365.4" width="4" height="2.5" fill="#007478"/><rect x="1208.4" y="361.2" width="1.4" height="4.5" fill="#000"/><rect x="1209.9" y="361.2" width="14.5" height="4.2" fill="#00e0e0"/><rect x="1211.9" y="365.4" width="9" height="3.8" fill="#007478"/><rect x="1221.9" y="365.4" width="4" height="2.5" fill="#007478"/><rect x="1224.7" y="361.2" width="1.4" height="4.5" fill="#000"/><rect x="1226.2" y="361.2" width="14.5" height="4.2" fill="#00e0e0"/><rect x="1228.2" y="365.4" width="9" height="3.8" fill="#007478"/><rect x="1238.2" y="365.4" width="4" height="2.5" fill="#007478"/><rect x="1241" y="361.2" width="1.4" height="4.5" fill="#000"/><rect x="1242.5" y="361.2" width="14.5" height="4.2" fill="#00e0e0"/><rect x="1244.5" y="365.4" width="9" height="3.8" fill="#007478"/><rect x="1254.5" y="365.4" width="4" height="2.5" fill="#007478"/><rect x="1257.3" y="361.2" width="1.4" height="4.5" fill="#000"/><rect x="1258.8" y="361.2" width="14.5" height="4.2" fill="#00e0e0"/><rect x="1260.8" y="365.4" width="9" height="3.8" fill="#007478"/><rect x="1270.8" y="365.4" width="4" height="2.5" fill="#007478"/><rect x="1273.6" y="361.2" width="1.4" height="4.5" fill="#000"/><rect x="1275.1" y="361.2" width="14.5" height="4.2" fill="#00e0e0"/><rect x="1277.1" y="365.4" width="9" height="3.8" fill="#007478"/><rect x="1287.1" y="365.4" width="4" height="2.5" fill="#007478"/><rect x="1289.9" y="361.2" width="1.4" height="4.5" fill="#000"/><rect x="1291.4" y="361.2" width="14.5" height="4.2" fill="#00e0e0"/><rect x="1293.4" y="365.4" width="9" height="3.8" fill="#007478"/><rect x="1303.4" y="365.4" width="4" height="2.5" fill="#007478"/><rect x="1306.2" y="361.2" width="1.4" height="4.5" fill="#000"/><rect x="1307.7" y="361.2" width="14.5" height="4.2" fill="#00e0e0"/><rect x="1309.7" y="365.4" width="9" height="3.8" fill="#007478"/><rect x="1319.7" y="365.4" width="4" height="2.5" fill="#007478"/><rect x="1322.5" y="361.2" width="1.4" height="4.5" fill="#000"/><rect x="1324" y="361.2" width="14.5" height="4.2" fill="#00e0e0"/><rect x="1326" y="365.4" width="9" height="3.8" fill="#007478"/><rect x="1336" y="365.4" width="4" height="2.5" fill="#007478"/><rect x="1338.8" y="361.2" width="1.4" height="4.5" fill="#000"/><rect x="1340.3" y="361.2" width="14.5" height="4.2" fill="#00e0e0"/><rect x="1342.3" y="365.4" width="9" height="3.8" fill="#007478"/><rect x="1352.3" y="365.4" width="4" height="2.5" fill="#007478"/><rect x="1355.1" y="361.2" width="1.4" height="4.5" fill="#000"/><rect x="1356.6" y="361.2" width="14.5" height="4.2" fill="#00e0e0"/><rect x="1358.6" y="365.4" width="9" height="3.8" fill="#007478"/><rect x="1368.6" y="365.4" width="4" height="2.5" fill="#007478"/><rect x="1371.4" y="361.2" width="1.4" height="4.5" fill="#000"/><rect x="1372.9" y="361.2" width="14.5" height="4.2" fill="#00e0e0"/><rect x="1374.9" y="365.4" width="9" height="3.8" fill="#007478"/><rect x="1384.9" y="365.4" width="4" height="2.5" fill="#007478"/><rect x="1387.7" y="361.2" width="1.4" height="4.5" fill="#000"/><rect x="1389.2" y="361.2" width="14.5" height="4.2" fill="#00e0e0"/><rect x="1391.2" y="365.4" width="9" height="3.8" fill="#007478"/><rect x="1401.2" y="365.4" width="4" height="2.5" fill="#007478"/><rect x="1404" y="361.2" width="1.4" height="4.5" fill="#000"/><rect x="1405.5" y="361.2" width="14.5" height="4.2" fill="#00e0e0"/><rect x="1407.5" y="365.4" width="9" height="3.8" fill="#007478"/><rect x="1417.5" y="365.4" width="4" height="2.5" fill="#007478"/><rect x="1420.3" y="361.2" width="1.4" height="4.5" fill="#000"/><rect x="1421.8" y="361.2" width="14.5" height="4.2" fill="#00e0e0"/><rect x="1423.8" y="365.4" width="9" height="3.8" fill="#007478"/><rect x="1433.8" y="365.4" width="4" height="2.5" fill="#007478"/><rect x="1436.6" y="361.2" width="1.4" height="4.5" fill="#000"/><rect x="1438.1" y="361.2" width="14.5" height="4.2" fill="#00e0e0"/><rect x="1440.1" y="365.4" width="9" height="3.8" fill="#007478"/><rect x="1450.1" y="365.4" width="4" height="2.5" fill="#007478"/><rect x="1452.9" y="361.2" width="1.4" height="4.5" fill="#000"/><rect x="1454.4" y="361.2" width="14.5" height="4.2" fill="#00e0e0"/><rect x="1456.4" y="365.4" width="9" height="3.8" fill="#007478"/><rect x="1466.4" y="365.4" width="4" height="2.5" fill="#007478"/><rect x="1469.2" y="361.2" width="1.4" height="4.5" fill="#000"/><rect x="901.5" y="301" width="660" height="8.2" fill="#e0e0e0" stroke="#000" stroke-width="1.17"/><rect x="903" y="302" width="29" height="6.5" fill="url(#railL)"/><path d="M932.5 301L932.5 309" stroke="#000" stroke-width="0.78" fill="none"/><rect x="1533" y="301.8" width="28.5" height="6.8" fill="url(#railR)"/><path d="M1533 301L1533 309" stroke="#000" stroke-width="0.78" fill="none"/><rect x="991.5" y="322.5" width="8" height="17" fill="#e0e0e0" stroke="#000" stroke-width="1.30"/><circle cx="995.5" cy="326.5" r="1.3" fill="#6e00da" stroke="#000" stroke-width="0.65"/><circle cx="995.5" cy="336" r="1.3" fill="#6e00da" stroke="#000" stroke-width="0.65"/><path d="M999.500 326 H1018 a5 5 0 0 1 0 10 H999.500" fill="#e8e8e8" stroke="#000" stroke-width="1.30"/><circle cx="1036.5" cy="316.5" r="4.3" fill="#e0e0e0" stroke="#000" stroke-width="1.04"/><circle cx="1036.5" cy="316.5" r="2" fill="#e0e0e0" stroke="#000" stroke-width="1.04"/><circle cx="1036.5" cy="346.5" r="4.3" fill="#e0e0e0" stroke="#000" stroke-width="1.04"/><circle cx="1036.5" cy="346.5" r="2" fill="#e0e0e0" stroke="#000" stroke-width="1.04"/><rect x="1053" y="312" width="21" height="39" fill="#e0e0e0" stroke="#000" stroke-width="1.30"/><path d="M1053 314.5L1074 314.5" stroke="#000" stroke-width="0.78" fill="none"/><path d="M1061.500 324 l2-2 2 2 v10 l-2 2-2-2z" fill="#f4f4f4" stroke="#000" stroke-width="0.91"/><path d="M1085 332l2-2 2 2-2 2z" fill="#e8e8e8" stroke="#000" stroke-width="1.17"/><path d="M1157 332l2-2 2 2-2 2z" fill="#e8e8e8" stroke="#000" stroke-width="1.17"/><path d="M1229 332l2-2 2 2-2 2z" fill="#e8e8e8" stroke="#000" stroke-width="1.17"/><path d="M1301 332l2-2 2 2-2 2z" fill="#e8e8e8" stroke="#000" stroke-width="1.17"/><path d="M1373 332l2-2 2 2-2 2z" fill="#e8e8e8" stroke="#000" stroke-width="1.17"/><rect x="1389" y="312" width="21" height="39" fill="#e0e0e0" stroke="#000" stroke-width="1.30"/><path d="M1389 314.5L1410 314.5" stroke="#000" stroke-width="0.78" fill="none"/><rect x="1397.5" y="324" width="4" height="12" fill="#f4f4f4" stroke="#000" stroke-width="0.91" rx="2"/><circle cx="1424.5" cy="316" r="4.3" fill="#e0e0e0" stroke="#000" stroke-width="1.04"/><circle cx="1424.5" cy="316" r="2" fill="#e0e0e0" stroke="#000" stroke-width="1.04"/><circle cx="1424.5" cy="346.5" r="4.3" fill="#e0e0e0" stroke="#000" stroke-width="1.04"/><circle cx="1424.5" cy="346.5" r="2" fill="#e0e0e0" stroke="#000" stroke-width="1.04"/><circle cx="1451" cy="331.5" r="22.5" fill="none" stroke="#000" stroke-width="1.30"/><circle cx="1451" cy="331.5" r="20" fill="none" stroke="#000" stroke-width="0.91"/><circle cx="1451" cy="331.5" r="15.5" fill="none" stroke="#000" stroke-width="1.30"/><circle cx="1451" cy="331.5" r="12" fill="none" stroke="#000" stroke-width="1.04"/><circle cx="1451" cy="331.5" r="8.5" fill="none" stroke="#000" stroke-width="1.56"/><circle cx="1451" cy="331.5" r="6.5" fill="none" stroke="#000" stroke-width="0.91"/><circle cx="1451" cy="331.5" r="5" fill="#e8e8e8" stroke="#000" stroke-width="1.30"/><circle cx="1074" cy="358" r="0.6" fill="#222"/><circle cx="1091" cy="358" r="0.6" fill="#222"/><circle cx="1306" cy="358" r="0.6" fill="#222"/><circle cx="1323" cy="358" r="0.6" fill="#222"/><rect x="1168.5" y="364" width="14" height="9.5" fill="none" stroke="#f4f4f4" stroke-width="1.56"/><path d="M1170.500 369.500 V360.500 H1181 V369.500" fill="none" stroke="#ff10e0" stroke-width="3.90"/><rect x="1173" y="364.5" width="5.5" height="6" fill="#f8f8f8"/><rect x="1170" y="366" width="2.5" height="1.5" fill="#900080"/><rect x="1179" y="366" width="2.5" height="1.5" fill="#900080"/><path d="M1002 371 H1017 V388 M1024 371 V379 M1027 371 V379 M1019 379 H1040 V388 M1021 379 V388 M1023 379 V388 M1040 381 H1235 M1235 371 V388" fill="none" stroke="#000" stroke-width="1.04"/><path d="M1233.500 369 V380 H1329 V369" fill="none" stroke="#000" stroke-width="2.08"/><path d="M1237 369 V378 M1325.500 369 V378" fill="none" stroke="#999" stroke-width="1.95"/><path d="M1253 369 Q1279 384 1305 369" fill="none" stroke="#000" stroke-width="0.91"/><path d="M1329 381 H1372 V371 M1380 371 V388 M1399 371 V388 M1405 371 V380 M1418 371 V380 M1405 380 H1490 M1417 383 H1490 V388 M1417 383 V388 M1443 383 V388 M1490 371 V383" fill="none" stroke="#000" stroke-width="1.04"/>
<rect x="895" y="418.5" width="84" height="210.5" fill="#e0e0e0" stroke="#000" stroke-width="1.69"/><rect x="895.5" y="426.5" width="67" height="194" fill="#0070a8" stroke="#000" stroke-width="1.04"/><path d="M970.5 419L970.5 629" stroke="#000" stroke-width="1.30" fill="none"/><path d="M963 420L969 420" stroke="#fff" stroke-width="1.30" fill="none"/><rect x="1009" y="418.5" width="378" height="210.5" fill="url(#bgv)" stroke="#000" stroke-width="1.69"/><rect x="1379" y="419" width="8" height="210" fill="#e0e0e0" stroke="#000" stroke-width="1.04"/><path d="M1382.5 419L1382.5 629" stroke="#000" stroke-width="1.30" fill="none"/><path d="M1009.500 419 h5.500 v22 l-5.500 5z" fill="url(#cylg)"/><rect x="1022" y="419" width="20" height="9" fill="#3a0606"/><rect x="1024" y="428" width="16" height="2" fill="#5a1010"/><path d="M1028 420v7M1031 420v7M1034 420v7" fill="none" stroke="#a01818" stroke-width="1.04"/><path d="M1051.500 419.500 h21 v22 q0 4 -4 4 h-13 q-4 0 -4 -4z" fill="url(#cylg)"/><path d="M1056 445.500 h12 l-3 5 h-6z" fill="#d8d8d8" stroke="#666" stroke-width="0.65"/><rect x="1060" y="450.5" width="4" height="5" fill="#888" stroke="#222" stroke-width="0.65"/><path d="M1062 455L1062 459" stroke="#222" stroke-width="1.30" fill="none"/><rect x="1165" y="466" width="64" height="28.5" fill="#e8e8e8" stroke="#000" stroke-width="1.56"/><path d="M1165 466 l6.500 7 h51 l6.500 -7 M1171.500 473 v15 h51 v-15 M1165 491 h64" fill="none" stroke="#000" stroke-width="1.17"/><rect x="1412" y="418.5" width="84" height="210.5" fill="#e0e0e0" stroke="#000" stroke-width="1.69"/><path d="M1412.500 426.500 H1478 V620.500 H1412.500z" fill="#0070a8" stroke="#000" stroke-width="1.04"/><path d="M1487.5 419L1487.5 629" stroke="#000" stroke-width="1.30" fill="none"/><rect x="1452" y="423.5" width="31" height="8" fill="#e4e4e4" stroke="#000" stroke-width="1.04" rx="2"/><rect x="1476" y="425" width="6" height="6" fill="#aaa"/><path d="M1461 424L1461 431" stroke="#000" stroke-width="0.78" fill="none"/><path d="M1476 424L1476 431" stroke="#000" stroke-width="0.78" fill="none"/><rect x="1451.5" y="431.5" width="31.5" height="103" fill="url(#cylg)"/><path d="M1451.5 431.5L1483 431.5" stroke="#000" stroke-width="1.04" fill="none"/><path d="M1451.5 447.5L1483 447.5" stroke="#000" stroke-width="1.82" fill="none"/><path d="M1451.5 519.7L1483 519.7" stroke="#000" stroke-width="1.82" fill="none"/><path d="M1451.5 534.5L1483 534.5" stroke="#000" stroke-width="1.30" fill="none"/><path d="M1483 431L1483 534.5" stroke="#222" stroke-width="1.30" fill="none"/><circle cx="1467.5" cy="440.5" r="3.6" fill="#fff" stroke="#000" stroke-width="1.30"/><circle cx="1467.5" cy="440.5" r="1.8" fill="#444" stroke="#000" stroke-width="0.78"/><circle cx="1467.5" cy="527.5" r="3.6" fill="#fff" stroke="#000" stroke-width="1.30"/><circle cx="1467.5" cy="527.5" r="1.8" fill="#444" stroke="#000" stroke-width="0.78"/><path d="M1412.500 531.500 H1446 q6 0 6 6 v5.500 q0 6 -6 6 H1412.500z" fill="#e0e0e0" stroke="#000" stroke-width="1.17"/><circle cx="1444.2" cy="539.7" r="3.8" fill="#0070a8" stroke="#000" stroke-width="1.04"/><rect x="1458.5" y="534.5" width="19" height="16" fill="#e0e0e0" stroke="#000" stroke-width="1.17"/><path d="M1456 534.5L1456 550" stroke="#000" stroke-width="1.04" fill="none"/><circle cx="1466.7" cy="543.7" r="3.3" fill="#0070a8" stroke="#000" stroke-width="1.04"/><rect x="854" y="659" width="126" height="6.5" fill="#c4c4d6" stroke="#000" stroke-width="1.04"/><path d="M866 659L866 665.5" stroke="#000" stroke-width="0.91" fill="none"/><path d="M860 659L860 665.5" stroke="#000" stroke-width="0.65" fill="none"/><rect x="1397.5" y="659" width="126.5" height="6.5" fill="#c4c4d6" stroke="#000" stroke-width="1.04"/><path d="M1407 659L1407 665.5" stroke="#000" stroke-width="0.91" fill="none"/><path d="M1082 659.6L1106 659.6" stroke="#ddd" stroke-width="1.30" fill="none"/><path d="M1340 660L1364 660" stroke="#ddd" stroke-width="1.30" fill="none"/><rect x="861" y="665" width="9.5" height="18" fill="url(#postg)"/><rect x="870.5" y="664" width="9.5" height="19" fill="url(#postg)"/><rect x="859.5" y="683" width="9" height="13.5" fill="#d4d4e2" stroke="#000" stroke-width="0.78"/><path d="M859.5 689.5L868.5 689.5" stroke="#000" stroke-width="0.78" fill="none"/><path d="M864 683L864 696.5" stroke="#000" stroke-width="0.65" fill="none"/><rect x="869.5" y="681.5" width="12.5" height="14.5" fill="#c4c4d6" stroke="#000" stroke-width="0.78"/><path d="M869.5 688.5L882 688.5" stroke="#000" stroke-width="0.78" fill="none"/><path d="M876 681.5L876 696" stroke="#000" stroke-width="0.65" fill="none"/><rect x="876" y="681.5" width="6" height="14.5" fill="#9e9eb2"/><rect x="861" y="696.5" width="20" height="2.5" fill="#d8d8e6"/><path d="M856 700L883 699L900 709.500L842 709.500z" fill="#000"/><rect x="842" y="709" width="57" height="6" fill="url(#plateg)"/><path d="M842 715L899 715" stroke="#000" stroke-width="1.30" fill="none"/><rect x="1497" y="665" width="9.5" height="18" fill="url(#postg)"/><rect x="1506.5" y="664" width="9.5" height="19" fill="url(#postg)"/><rect x="1495.5" y="683" width="9" height="13.5" fill="#d4d4e2" stroke="#000" stroke-width="0.78"/><path d="M1495.5 689.5L1504.5 689.5" stroke="#000" stroke-width="0.78" fill="none"/><path d="M1500 683L1500 696.5" stroke="#000" stroke-width="0.65" fill="none"/><rect x="1505.5" y="681.5" width="12.5" height="14.5" fill="#c4c4d6" stroke="#000" stroke-width="0.78"/><path d="M1505.5 688.5L1518 688.5" stroke="#000" stroke-width="0.78" fill="none"/><path d="M1512 681.5L1512 696" stroke="#000" stroke-width="0.65" fill="none"/><rect x="1512" y="681.5" width="6" height="14.5" fill="#9e9eb2"/><rect x="1497" y="696.5" width="20" height="2.5" fill="#d8d8e6"/><path d="M1492 700L1519 699L1536 709.500L1478 709.500z" fill="#000"/><rect x="1478" y="709" width="57" height="6" fill="url(#plateg)"/><path d="M1478 715L1535 715" stroke="#000" stroke-width="1.30" fill="none"/><rect x="915" y="665.5" width="64" height="2" fill="#aaa" stroke="#000" stroke-width="0.65"/><path d="M926 668 h44 v5 h-44z" fill="url(#forkg)" stroke="#000" stroke-width="0.65"/><path d="M934 667.500 h36 v4 h-36z" fill="#d8d8e8" stroke="#000" stroke-width="0.52"/><circle cx="966" cy="709" r="21.5" fill="#b9b9cd" stroke="#000" stroke-width="1.04"/><circle cx="975" cy="707" r="22.3" fill="#b9b9cd" stroke="#000" stroke-width="1.17"/><path d="M926 676 l8 2 l41 40 a5 5 0 0 0 6 -10 v-34 h-16 v-4 h-30 z" fill="url(#forkg)" stroke="#000" stroke-width="0.91"/><path d="M964 674 h17 v34 a5 5 0 0 1 -6 8 l-11 -11z" fill="#b9b9cd" stroke="#000" stroke-width="0.91"/><path d="M965.5 674L965.5 705" stroke="#000" stroke-width="0.78" fill="none"/><circle cx="975.5" cy="707.5" r="4.3" fill="#c4c4d6" stroke="#000" stroke-width="1.17"/><rect x="1397.5" y="665.5" width="64" height="2" fill="#aaa" stroke="#000" stroke-width="0.65"/><path d="M1408 668 h44 v5 h-44z" fill="url(#forkg2)" stroke="#000" stroke-width="0.65"/><path d="M1408 667.500 h36 v4 h-36z" fill="#d8d8e8" stroke="#000" stroke-width="0.52"/><circle cx="1401.5" cy="709.5" r="21.5" fill="#b9b9cd" stroke="#000" stroke-width="1.04"/><circle cx="1410.5" cy="707.5" r="22.3" fill="#b9b9cd" stroke="#000" stroke-width="1.17"/><path d="M1452 676 l-8 2 l-33 34 a5 5 0 0 1 -6 -7 v-31 h16 v-4 h30 z" fill="url(#forkg2)" stroke="#000" stroke-width="0.91"/><path d="M1422 674 h-17 v31 a5 5 0 0 0 6 7 l11 -11z" fill="#b9b9cd" stroke="#000" stroke-width="0.91"/><path d="M1420.5 674L1420.5 702" stroke="#000" stroke-width="0.78" fill="none"/><rect x="1397" y="673" width="8" height="10" fill="#c4c4d6" stroke="#000" stroke-width="0.78"/><circle cx="1410.5" cy="707.5" r="4.3" fill="#c4c4d6" stroke="#000" stroke-width="1.17"/>
</g>
<g><path d="M530 391L530 366" stroke="#e8e8e8" stroke-width="1.00" fill="none" stroke-dasharray="5 3"/><path d="M530 391L600 391" stroke="#10808c" stroke-width="2.00" fill="none"/><path d="M597 387.500L606 391L597 394.500z" fill="#10808c"/><path d="M529.5 391L529.5 432" stroke="#0c9c1c" stroke-width="2.40" fill="none"/><path d="M530.5 396L530.5 425" stroke="#e0e0e0" stroke-width="1.00" fill="none" stroke-dasharray="8 4"/><path d="M526 430L533.500 430L529.700 441z" fill="#0c9c1c"/><circle cx="530" cy="391" r="3.5" fill="#a02020"/><path d="M526.500 387.500l7 7M533.500 387.500l-7 7" fill="none" stroke="#f0f0f0" stroke-width="1.00"/><text x="607" y="396" font-size="12" fill="#ff0000" font-family="Liberation Sans,sans-serif">Z</text><text x="524.500" y="452" font-size="11" fill="#e0e0e0" font-family="Liberation Sans,sans-serif">Y</text></g><g><rect x="121" y="942.5" width="25" height="25" fill="rgba(200,205,225,.28)" stroke="#c8c8c8" stroke-width="1.00"/><path d="M124 941.5L190 941.5" stroke="#00c8d0" stroke-width="2.20" fill="none"/><path d="M124 940.6L133 940.6" stroke="#d8d8d8" stroke-width="1.00" fill="none"/><path d="M186 937.500L196.500 941.700L186 945.500z" fill="#00b8c0"/><path d="M119.6 945L119.6 985" stroke="#00d800" stroke-width="2.60" fill="none"/><path d="M121.2 945L121.2 967" stroke="#f0e000" stroke-width="1.00" fill="none"/><path d="M115.500 982L124 982L119.700 992.500z" fill="#00c000"/><rect x="116.5" y="938" width="7.5" height="7.5" fill="#b00000"/><path d="M116.500 937.500l8 8.500M124.500 937.500l-8 8.500" fill="none" stroke="#f4f4f4" stroke-width="1.00"/><text x="197.500" y="947" font-size="12.500" fill="#ff0000" font-family="Liberation Sans,sans-serif">Z</text><text x="114.500" y="1003" font-size="12" fill="#d8d8d8" font-family="Liberation Sans,sans-serif">Y</text></g><g opacity=".93"><path d="M892.500 518V538.500 M896 514V536 M899.500 510V534.500 M934.500 518V538.500 M931 514V536 M927.500 510V534.500" fill="none" stroke="url(#wm)" stroke-width="1.50"/><path d="M892 539 Q905 533.500 913 538.500 Q921 533.500 935 539" fill="none" stroke="#f08818" stroke-width="1.60"/><path d="M896 536 Q906 532 912 536.500 M931 536 Q921 532 915 536.500" fill="none" stroke="#f5a030" stroke-width="1.10"/><path d="M914 508.500 C903 512 901 526 908 531 C905 522 909 516 914 514z" fill="url(#wm)"/><path d="M913.500 535 C925 531 927 518 920 512.500 C922 521 918 526 913.500 529z" fill="url(#wm)"/><path d="M914 509 L913.500 534.500" fill="none" stroke="#f59a28" stroke-width="1.60"/><rect x="907.5" y="536.5" width="11" height="2" fill="#f06010"/><text x="946.500" y="529" font-size="16.600" font-weight="700" fill="url(#wm)" font-family="Liberation Sans,Noto Sans CJK SC,sans-serif" textLength="83" lengthAdjust="spacingAndGlyphs">智造资料网</text><text x="947" y="538.300" font-size="4.700" font-weight="700" fill="#f09a30" font-family="Liberation Sans,sans-serif" textLength="82" lengthAdjust="spacingAndGlyphs">INTELLIGENT MANUFACTURING DATA</text></g>
</svg>
</div>
<div id="status1">
 <div class="abs" style="left:1337px;top:3px;width:3px;height:15px;background:repeating-linear-gradient(#aeb4c4 0,#aeb4c4 1px,rgba(0,0,0,0) 1px,rgba(0,0,0,0) 3px)"></div>
 <div class="abs" style="left:1341px;top:2px;width:131px;height:17px;background:#fff;"></div>
 <svg class="abs" style="left:1460px;top:5px" width="12" height="12" viewBox="0 0 12 12"><circle cx="5" cy="5" r="3.500" fill="#e8f0fc" stroke="#5c84c8" stroke-width="1.200"/><path d="M7.500 7.500L11 11" stroke="#5c84c8" stroke-width="1.500"/></svg>
 <div class="abs" style="left:1476px;top:3px;width:3px;height:15px;background:repeating-linear-gradient(#aeb4c4 0,#aeb4c4 1px,rgba(0,0,0,0) 1px,rgba(0,0,0,0) 3px)"></div>
 <div class="st" style="left:1486px;top:4px;font-size:12px;letter-spacing:0">绝对 XY 上视图</div>
 <div class="sep" style="left:1592px;top:2px;height:17px"></div>
 <div class="st" style="left:1601px;top:3px;">绝对视图</div>
 <div class="abs" style="left:1658px;top:3px;width:3px;height:15px;background:repeating-linear-gradient(#aeb4c4 0,#aeb4c4 1px,rgba(0,0,0,0) 1px,rgba(0,0,0,0) 3px)"></div>
 <div class="st" style="left:1668px;top:3px;font-weight:bold;font-size:11.600px;">LAYER0</div>
 <div class="sep" style="left:1726px;top:2px;height:17px"></div>
 <div class="sep" style="left:1757px;top:2px;height:17px"></div>
 <div class="abs" style="left:1762px;top:4px;width:32px;height:12px;background:#46618c"></div>
 <div class="sep" style="left:1800px;top:2px;height:17px"></div>
 <div class="abs" style="left:1805px;top:4px;width:32px;height:12px;background:#46618c"></div>
 <div class="sep" style="left:1843px;top:2px;height:17px"></div>
 <div class="abs" style="left:1848px;top:4px;width:32px;height:12px;background:#46618c"></div>
 <div class="sep" style="left:1886px;top:2px;height:17px"></div>
 <svg class="abs" style="left:1893px;top:2px" width="15" height="15" viewBox="0 0 15 15"><circle cx="7.500" cy="7.500" r="6.800" fill="#1838c8" stroke="#0c1c70" stroke-width=".8"/><path d="M3 4.500C5 2 8 3 8.500 5C9 7 6 8 5 10.500C3.500 10 2 7 3 4.500z" fill="#30c030"/><path d="M9.500 8C11.500 7 13.500 8 13 10.500C12 12.500 10 13 9.500 11z" fill="#30c030"/><path d="M9 2.500L12 3.500L11 5z" fill="#48d848"/><circle cx="5.500" cy="4.500" r="1.500" fill="#fff" opacity=".35"/></svg>
</div>
<div id="stline"></div>
<div id="status2">
 <div class="sep" style="left:1132px;top:2px;height:16px"></div>
 <div class="st" style="left:1141px;top:2px;">拴牢</div>
 <div class="sep" style="left:1175px;top:2px;height:16px"></div>
 <svg class="abs" style="left:1181px;top:0px" width="18" height="18" viewBox="0 0 18 18"><rect x=".75" y=".75" width="16.500" height="16.500" fill="#ccd0dc" stroke="#6c7490" stroke-width="1.500"/><path d="M3.500 8.500C3.500 4.500 8.500 3 11.500 5L12.800 3.500L14 8.500L9 8L10.300 6.500C8.500 5.500 5.800 6.200 5.800 8.500zM14.500 9.500C14.500 13.500 9.500 15 6.500 13L5.200 14.500L4 9.500L9 10L7.700 11.500C9.500 12.500 12.200 11.800 12.200 9.500z" fill="#f0a0a8" stroke="#d84058" stroke-width=".9"/></svg>
 <div class="sep" style="left:1206px;top:2px;height:16px"></div>
 <svg class="abs" style="left:1212px;top:0px" width="18" height="18" viewBox="0 0 18 18"><rect width="18" height="18" fill="#ffe27a"/><path d="M6.500 1l1 3 3-1-1.500 3 3 1.500-3 1 .5 3.500-2.500-2.500-2.500 2 .5-3.500-3-1 3-1.500-1-3 2.500 1.500z" fill="#f0a030" stroke="#c02890" stroke-width=".7"/><path d="M8.500 6.500L15.500 14L12.500 14.300L14 17.300L12.300 18L11 15L9 17z" fill="#e8e8f0" stroke="#606878" stroke-width=".8"/></svg>
 <div class="sep" style="left:1237px;top:2px;height:16px"></div>
 <svg class="abs" style="left:1244px;top:0px" width="18" height="18" viewBox="0 0 18 18"><path d="M2 9L7.500 3.500L13 9V17H2z" fill="#dce8f8" stroke="#3c5898" stroke-width="1"/><path d="M4 11h3v3H4zM8.500 11h3v6h-3z" fill="#4870c0"/><path d="M8 5L12 1.500L17.500 2L18 5L14 8L9.500 8z" fill="#f0c080" stroke="#a06820" stroke-width=".7"/><path d="M11 4L15 3M11.500 6L15.500 5" stroke="#a06820" stroke-width=".6"/></svg>
 <div class="sep" style="left:1268px;top:2px;height:16px"></div>
 <svg class="abs" style="left:1275px;top:0px" width="18" height="18" viewBox="0 0 18 18"><ellipse cx="9.500" cy="16.800" rx="5" ry="1" fill="#555" opacity=".35"/><text x="9" y="15" font-size="17" font-weight="700" text-anchor="middle" fill="#4878d0" stroke="#2850a8" stroke-width=".4" font-family="Liberation Sans,sans-serif">?</text></svg>
 <div class="sep" style="left:1299px;top:2px;height:16px"></div>
 <svg class="abs" style="left:1304px;top:0px" width="20" height="18" viewBox="0 0 20 18"><path d="M3 3.500L7 1.500L12 3V8L8 10L3 8.500z" fill="#4880e0" stroke="#1c3c88" stroke-width=".7"/><path d="M3 3.500L8 5L12 3M8 5V10" stroke="#a8c8f8" stroke-width=".7" fill="none"/><path d="M10 9.500L14 7.500L19 9V14.500L15 16.500L10 15z" fill="#a8d8e0" stroke="#283848" stroke-width=".8"/><path d="M10 9.500L15 11L19 9M15 11V16.500" stroke="#283848" stroke-width=".7" fill="none"/><path d="M1 12H8M5.500 9L9 12L5.500 15" stroke="#e01818" stroke-width="1.600" fill="none"/><path d="M1 9.500l3 2.500l-3 2.500" stroke="#e01818" stroke-width="1" fill="none"/></svg>
 <div class="sep" style="left:1330px;top:2px;height:16px"></div>
 <svg class="abs" style="left:1336px;top:0px" width="18" height="18" viewBox="0 0 18 18"><rect width="18" height="18" fill="#ffe27a"/><path d="M2 5.500L9 2.500L16 5.500L9 8.500z" fill="#e020e0" stroke="#283848" stroke-width=".8"/><path d="M2 5.500L9 8.500V16L2 13z" fill="#88a8b0" stroke="#283848" stroke-width=".8"/><path d="M9 8.500L16 5.500V13L9 16z" fill="#a8c8c8" stroke="#283848" stroke-width=".8"/><path d="M3 6.500v6l5 2.300" stroke="#3858c8" stroke-width="1" fill="none"/></svg>
 <div class="sep" style="left:1361px;top:2px;height:16px"></div>
 <svg class="abs" style="left:1369px;top:1px" width="14" height="17" viewBox="0 0 14 17"><rect x="1.500" y="1.500" width="10" height="13" fill="#f4f4f8" stroke="#707888" stroke-width="1"/><path d="M3.500 5h6M3.500 8h6M3.500 11h6" stroke="#8898b8" stroke-width="1"/></svg>
 <div class="sep" style="left:1392px;top:2px;height:16px"></div>
 <svg class="abs" style="left:1399px;top:0px" width="18" height="18" viewBox="0 0 18 18"><circle cx="9" cy="8" r="6.500" fill="#f0f8f0" stroke="#289828" stroke-width="2"/><path d="M9 4v4.500l3 2" stroke="#1c3c88" stroke-width="1.300" fill="none"/></svg>
 <div class="sep" style="left:1423px;top:2px;height:16px"></div>
 <svg class="abs" style="left:1430px;top:1px" width="18" height="16" viewBox="0 0 18 16"><rect x="1.500" y="1.500" width="6.500" height="12" fill="#e8ecf4" stroke="#586078" stroke-width="1"/><rect x="9.500" y="1.500" width="6.500" height="12" fill="#e8ecf4" stroke="#586078" stroke-width="1"/></svg>
 <div class="sep" style="left:1454px;top:2px;height:16px"></div>
 <div class="st" style="left:1463.500px;top:2.500px;font-size:11.900px">LS: 1.00 PS: 1.00</div>
 <div class="sep" style="left:1580px;top:2px;height:16px"></div>
 <div class="st" style="left:1589px;top:2px;">单位: 毫米</div>
 <div class="sep" style="left:1654px;top:2px;height:16px"></div>
 <div class="st" id="cx" style="left:1663px;top:2.500px;font-size:12.800px">X = 0365.166</div>
 <div class="st" id="cy" style="left:1745px;top:2.500px;font-size:12.800px;color:#f01010">Y =-0041.991</div>
 <div class="st" id="cz" style="left:1826px;top:2.500px;font-size:12.800px">Z = 1063.374</div>
</div>
<!-- IME floating bar -->
<div class="abs" style="left:1371px;top:1010px;width:194px;height:21px;background:#fff;border-radius:3px;box-shadow:0 0 0 1px #d8dce4,0 1px 3px rgba(0,0,0,.25);"></div>
<svg class="abs" style="left:1356px;top:1003px" width="34" height="34" viewBox="0 0 34 34"><g transform="rotate(-12 17 17)"><rect x="5" y="5.500" width="25" height="23" rx="5" fill="#f4581c"/><text x="17.500" y="26.500" font-size="27" font-weight="700" text-anchor="middle" fill="#fff" font-family="Liberation Sans,sans-serif" transform="translate(0 0) scale(1.150 1) translate(-2.300 0)">S</text></g></svg>
<div class="abs" style="left:1392px;top:1011px;width:17px;height:19px;line-height:19px;font-size:16px;font-weight:bold;color:#2a7de1;font-family:'Liberation Sans','Noto Sans CJK SC',sans-serif">中</div>
<svg class="abs" style="left:1414px;top:1011px" width="152" height="20" viewBox="0 0 152 20">
 <g fill="none" stroke="#2a7de1" stroke-width="1.600">
 <circle cx="4" cy="6" r="1.500"/><path d="M10.500 8.500q1.500 3 -1.500 5" stroke-width="2"/>
 <circle cx="30" cy="10" r="7"/><path d="M26.500 11.500q3.500 4 7 0" /><path d="M27.500 6.500v2.500M32.500 6.500v2.500" stroke-width="1.500"/>
 <path d="M46.500 9q0 6 5.500 6t5.500-6M52 15v3.500"/>
 </g>
 <rect x="49.300" y="2" width="5.400" height="10.500" rx="2.700" fill="#2a7de1"/>
 <rect x="66" y="4" width="16" height="11.500" rx="1.500" fill="#2a7de1"/><path d="M68.500 7h1.500M71.500 7h1.500M74.500 7h1.500M77.500 7h1.500M68.500 9.800h1.500M71.500 9.800h1.500M74.500 9.800h1.500M77.500 9.800h1.500M70 12.800h8" stroke="#fff" stroke-width="1.300"/>
 <circle cx="96" cy="6" r="3.300" fill="#b8c0cc"/><path d="M89.500 16.500q0-6.500 6.500-6.500q3 0 4.500 1.500l-2 5z" fill="#b8c0cc"/><rect x="98" y="11" width="6.500" height="6.500" rx="1" fill="#c8d0dc"/><text x="101.300" y="16.600" font-size="6" text-anchor="middle" fill="#fff" font-family="Liberation Sans,sans-serif" font-weight="700">?</text>
 <path d="M114.500 3.500L111 5.500L109.500 9L112.500 10V17H123.500V10L126.500 9L125 5.500L121.500 3.500Q118 6 114.500 3.500z" fill="#2a7de1"/>
 <rect x="133.500" y="3.500" width="5.600" height="5.600" fill="#2a7de1"/><rect x="141" y="3.500" width="5.600" height="5.600" rx="1" fill="none" stroke="#2a7de1" stroke-width="1.400"/><rect x="133.500" y="11" width="5.600" height="5.600" fill="#2a7de1"/><rect x="141" y="11" width="5.600" height="5.600" fill="#2a7de1"/>
</svg>
<div id="taskbar">
 <div class="abs" style="left:48px;top:0;width:344px;height:8px;background:#f2f2f2;border-top:1px solid #c8c8c8;box-sizing:border-box"></div>
 <div class="abs" style="left:589px;top:0;width:48px;height:8px;background:#a3602f"></div>
 <div class="abs" style="left:637px;top:0;width:49px;height:8px;background:#4b4b4b"></div>
 <div class="abs" style="left:1816px;top:3px;font-size:12px;line-height:14px;color:#fff;white-space:nowrap">15:19</div>
 <div class="abs" style="left:1914px;top:0;width:1px;height:8px;background:#707070"></div>
</div>

</body>
</html>
